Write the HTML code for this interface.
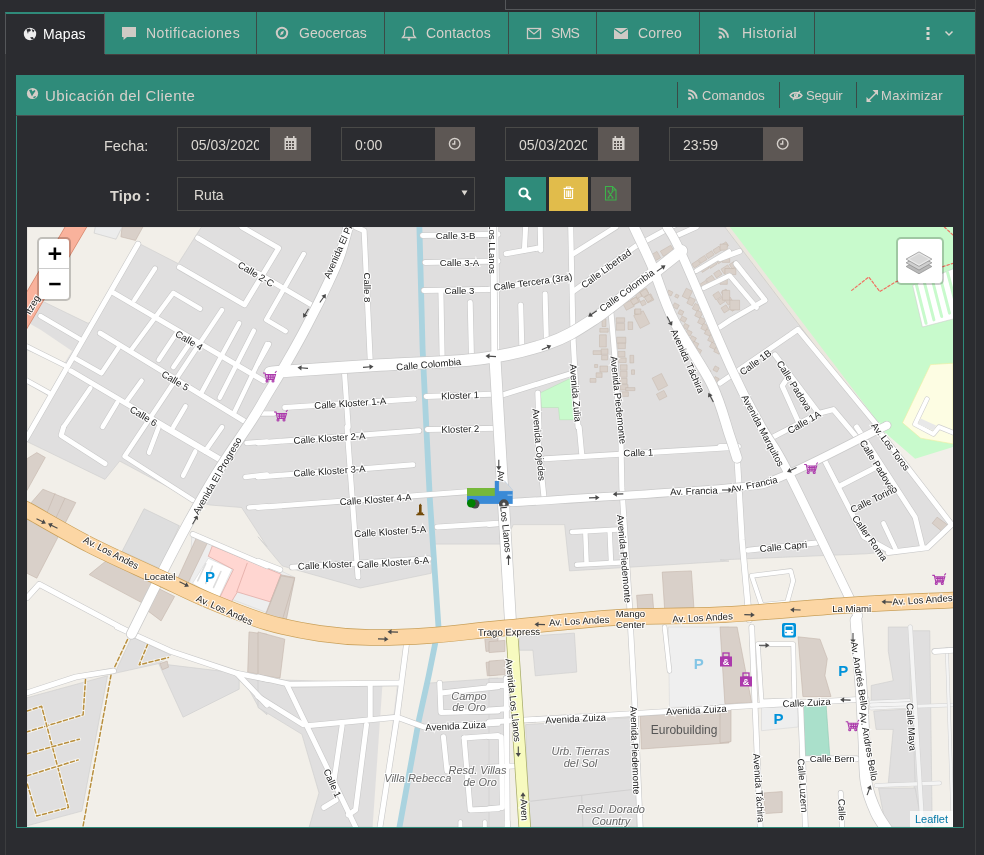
<!DOCTYPE html>
<html><head><meta charset="utf-8">
<style>
*{box-sizing:border-box;margin:0;padding:0}
html,body{width:984px;height:855px;overflow:hidden;background:#2b2c30;font-family:"Liberation Sans",sans-serif}
.abs{position:absolute}
#topbox{left:505px;top:-2px;width:471px;height:12px;border:1px solid #55575a;border-top:none}
#lline{left:5px;top:53px;width:1px;height:802px;background:#3c3d3f}
#rline{left:975px;top:0;width:1px;height:855px;background:#3c3d3f}
#tabs{left:5px;top:12px;width:970px;height:42px;background:#2f8b7a}
.tab{position:absolute;top:0;height:42px;color:#d9d5cf;font-size:14.5px;line-height:42px;border-right:1px solid #3d4a47}
.tab svg{position:absolute}
#active{left:5px;top:12px;width:100px;height:42px;background:#2b2c30;border-top:2px solid #2f8b7a;border-left:1px solid #55575a;border-right:1px solid #55575a}
.tt{position:absolute;top:12.4px;height:42px;line-height:42px;font-size:14px;color:#d6d1cb;white-space:nowrap}
.sep{position:absolute;top:12px;width:1px;height:42px;background:#3b4a46}
.sep2{position:absolute;top:82px;width:1px;height:26px;background:#3a4a46}
.hl{position:absolute;top:76px;line-height:40px;font-size:13px;color:#d8d0cb;white-space:nowrap}
.lbl{position:absolute;line-height:34px;white-space:nowrap}
#phead{left:16px;top:75px;width:948px;height:41px;background:#2f8b7a;border-bottom:1px solid #4a4e50}
#pbody{left:16px;top:116px;width:948px;height:712px;border:1px solid #2f8b7a;border-top:none}
.lbl{color:#dcd8d2;font-size:14.5px}
.inp{position:absolute;height:34px;border:1px solid #4a4a48;background:#2b2c30;color:#dcd8d2;font-size:14px;line-height:34px}
.add{position:absolute;height:34px;background:#5d5754}
.btn{position:absolute;height:34px}
#map{left:27px;top:227px;width:926px;height:600px;overflow:hidden;background:#f2efe9;will-change:transform}
</style></head><body><div id="wrap" style="position:absolute;left:0;top:0;width:984px;height:855px;will-change:transform">
<div id="topbox" class="abs"></div>
<div id="lline" class="abs"></div>
<div id="rline" class="abs"></div>
<div id="tabs" class="abs"></div>
<div id="active" class="abs"></div>
<svg class="abs" style="left:0;top:0;z-index:5" width="984" height="60" viewBox="0 0 984 60">
 <g fill="#eeeeee"><circle cx="30" cy="34" r="6.2"/></g>
 <g fill="#2b2c30"><path d="M26.5 29.5 l3 -1 l1.5 1.5 l-1 1.5 l-1.5 0 l-0.5 2.5 z M31.5 29 l3 1.5 l-1.5 2 z M30 37.5 l2.5 -0.5 l1.5 1.5 l-2 1 z"/></g>
 <!-- notif bubble -->
 <path d="M122 27 h14 v10 h-9 l-3.5 3 v-3 h-1.5 z" fill="#cfcac5"/>
 <!-- geocercas compass -->
 <circle cx="282" cy="33" r="5.2" fill="none" stroke="#cfcac5" stroke-width="2"/>
 <path d="M280 35.5 l1 -3.5 l3 -1.5 l-1 3.5 z" fill="#cfcac5"/>
 <!-- bell -->
 <path d="M409 27 c-3 0 -4.5 2.5 -4.5 5 v3 l-2 2.5 h13 l-2 -2.5 v-3 c0 -2.5 -1.5 -5 -4.5 -5 z" fill="none" stroke="#cfcac5" stroke-width="1.3"/>
 <circle cx="409" cy="39.5" r="1.3" fill="#cfcac5"/>
 <!-- envelope outline -->
 <rect x="527.5" y="28.5" width="13" height="10" fill="none" stroke="#cfcac5" stroke-width="1.3"/>
 <path d="M528 29 l6 5 l6 -5" fill="none" stroke="#cfcac5" stroke-width="1.2"/>
 <!-- envelope solid -->
 <path d="M614 28 h14 v11 h-14 z" fill="#cfcac5"/>
 <path d="M614 28.5 l7 5 l7 -5" fill="none" stroke="#2f8b7a" stroke-width="1.2"/>
 <!-- rss -->
 <g fill="none" stroke="#cfcac5"><circle cx="720.3" cy="37.3" r="1.7" fill="#cfcac5" stroke="none"/>
 <path d="M718.7 32.2 a5.6 5.6 0 0 1 5.6 5.6" stroke-width="2"/>
 <path d="M718.7 28.5 a9.3 9.3 0 0 1 9.3 9.3" stroke-width="2"/></g>
 <!-- kebab -->
 <g fill="#d9d5cf"><rect x="926.5" y="27" width="3" height="3"/><rect x="926.5" y="32" width="3" height="3"/><rect x="926.5" y="37" width="3" height="3"/></g>
 <path d="M945.5 31.5 l3.5 3.5 l3.5 -3.5" fill="none" stroke="#d9d5cf" stroke-width="1.5"/>
</svg>
<div class="tt" style="left:43px;top:13px;color:#fff;letter-spacing:0.15px">Mapas</div>
<div class="tt" style="left:146px;letter-spacing:0.5px">Notificaciones</div>
<div class="tt" style="left:299px;letter-spacing:0px">Geocercas</div>
<div class="tt" style="left:426px;letter-spacing:0.2px">Contactos</div>
<div class="tt" style="left:551px;letter-spacing:-0.7px">SMS</div>
<div class="tt" style="left:638px;letter-spacing:0.2px">Correo</div>
<div class="tt" style="left:742px;letter-spacing:0.5px">Historial</div>
<div class="sep" style="left:256px"></div>
<div class="sep" style="left:384px"></div>
<div class="sep" style="left:508px"></div>
<div class="sep" style="left:596px"></div>
<div class="sep" style="left:699px"></div>
<div class="sep" style="left:814px"></div>
<div class="abs" style="left:105px;top:54px;width:870px;height:1px;background:#45403f"></div>
<div id="phead" class="abs"></div>
<div id="pbody" class="abs"></div>
<svg class="abs" style="left:0;top:60px;z-index:5" width="984" height="160" viewBox="0 60 984 160">
 <!-- header globe -->
 <circle cx="32.5" cy="93.5" r="5.6" fill="#d5cdc8"/>
 <path d="M29 90 l2.5 -0.5 l1 2 l2 -1.5 l1 1 l-2.5 3.5 l-1 2 z M33 97 l2.5 -1 l0.5 1 l-2 1.5 z" fill="#2f8b7a"/>
 <!-- header icons -->
 <g fill="none" stroke="#d5cdc8"><circle cx="689.6" cy="98.4" r="1.6" fill="#d5cdc8" stroke="none"/>
 <path d="M688.2 93.6 a5.2 5.2 0 0 1 5.2 5.2" stroke-width="1.9"/>
 <path d="M688.2 90.2 a8.6 8.6 0 0 1 8.6 8.6" stroke-width="1.9"/></g>
 <g fill="none" stroke="#d5cdc8" stroke-width="1.3"><path d="M790 95.5 c3 -4 9 -4 12 0 c-3 4 -9 4 -12 0 z"/><path d="M793 100 l7 -9"/><circle cx="796" cy="95.5" r="1.6"/></g>
 <g fill="none" stroke="#d5cdc8" stroke-width="1.5"><path d="M868 101 l9 -9"/></g>
 <g fill="#d5cdc8"><path d="M866.5 97 v5 h5 z"/><path d="M878 90 v5.5 h-0 l-5.5 -5.5 z"/></g>
 <!-- calendar icons -->
 <g fill="#d5d0cb">
  <path d="M284.5 138 h12 v12 h-12 z"/>
  <path d="M612.5 138 h12 v12 h-12 z"/>
 </g>
 <g fill="#5d5754">
  <path d="M286 141 h2 v2 h-2z M289 141 h2 v2 h-2z M292 141 h2 v2 h-2z M286 144 h2 v2 h-2z M289 144 h2 v2 h-2z M292 144 h2 v2 h-2z M286 147 h2 v2 h-2z M289 147 h2 v2 h-2z M292 147 h2 v2 h-2z"/>
  <path d="M614 141 h2 v2 h-2z M617 141 h2 v2 h-2z M620 141 h2 v2 h-2z M614 144 h2 v2 h-2z M617 144 h2 v2 h-2z M620 144 h2 v2 h-2z M614 147 h2 v2 h-2z M617 147 h2 v2 h-2z M620 147 h2 v2 h-2z"/>
 </g>
 <g fill="#d5d0cb"><rect x="286.5" y="136" width="1.6" height="3"/><rect x="293" y="136" width="1.6" height="3"/><rect x="614.5" y="136" width="1.6" height="3"/><rect x="621" y="136" width="1.6" height="3"/></g>
 <!-- clocks -->
 <g fill="none" stroke="#d5d0cb" stroke-width="1.4"><circle cx="454.7" cy="143.8" r="5.3"/><path d="M454.7 140.5 v3.5 h-2.5"/><circle cx="782.7" cy="143.8" r="5.3"/><path d="M782.7 140.5 v3.5 h-2.5"/></g>
 <!-- select arrow -->
 <path d="M461.5 190.5 h6 l-3 5 z" fill="#dcd8d2"/>
 <!-- search -->
 <circle cx="523.5" cy="192.5" r="4" fill="none" stroke="#fff" stroke-width="2.2"/>
 <path d="M526.5 195.5 l3.5 3.5" stroke="#fff" stroke-width="2.6" stroke-linecap="round"/>
 <!-- trash -->
 <g fill="none" stroke="#fff" stroke-width="1.2"><path d="M563.5 188.5 h10"/><path d="M566.5 188.5 v-1.5 h4 v1.5"/><path d="M564.5 189.5 v9 h8 v-9"/><path d="M566.8 190.5 v6.5 M568.5 190.5 v6.5 M570.2 190.5 v6.5"/></g>
 <!-- excel -->
 <g fill="none" stroke="#3cb34a" stroke-width="1.1"><path d="M605.5 186.5 h7 l3.5 3.5 v10 h-10.5 z"/><path d="M612.5 186.5 v3.5 h3.5"/><path d="M608 191 l5 7 M613 191 l-5 7 M607.5 191 h2 M611.5 191 h2 M607.5 198 h2 M611.5 198 h2"/></g>
</svg>
<div class="abs" style="left:45px;top:76px;line-height:40px;font-size:15px;color:#d8d0cb;letter-spacing:0.45px;white-space:nowrap">Ubicación del Cliente</div>
<div class="sep2" style="left:677px"></div>
<div class="sep2" style="left:779px"></div>
<div class="sep2" style="left:856px"></div>
<div class="hl" style="left:702px">Comandos</div>
<div class="hl" style="left:806px;letter-spacing:-0.2px">Seguir</div>
<div class="hl" style="left:881px;letter-spacing:0.3px">Maximizar</div>
<div class="lbl" style="left:104px;top:129px">Fecha:</div>
<div class="lbl" style="left:110px;top:178.5px;font-weight:bold;letter-spacing:0.2px">Tipo :</div>
<div class="inp" style="left:177px;top:127px;width:94px;padding-left:13px;white-space:nowrap"><span style="display:block;overflow:hidden;width:68px">05/03/2020</span></div>
<div class="add" style="left:270px;top:127px;width:41px"></div>
<div class="inp" style="left:341px;top:127px;width:95px;padding-left:13px">0:00</div>
<div class="add" style="left:435px;top:127px;width:40px"></div>
<div class="inp" style="left:505px;top:127px;width:94px;padding-left:13px;white-space:nowrap"><span style="display:block;overflow:hidden;width:68px">05/03/2020</span></div>
<div class="add" style="left:598px;top:127px;width:41px"></div>
<div class="inp" style="left:669px;top:127px;width:95px;padding-left:13px">23:59</div>
<div class="add" style="left:763px;top:127px;width:40px"></div>
<div class="inp" style="left:177px;top:177px;width:298px;padding-left:16px;line-height:35px">Ruta</div>
<div class="btn" style="left:505px;top:177px;width:41px;background:#2f8b7a"></div>
<div class="btn" style="left:549px;top:177px;width:39px;background:#e1bc4b"></div>
<div class="btn" style="left:591px;top:177px;width:40px;background:#5d5754"></div>
<div id="map" class="abs"><svg width="926" height="600" viewBox="27 227 926 600" style="display:block;font-family:'Liberation Sans',sans-serif"><path d="M27 227 L39 227 L27 234 Z" fill="#c8facc"/>
<path d="M727.3 227 L953 227 L953 827 L878.5 427 Z" fill="#c8facc"/>
<path d="M885.9 427.0 L915.1 458.7 L960.0 449.0 L960.0 427.0 Z" fill="#c8facc"/>
<path d="M930.5 364.6 L953 363.2 L953 443.9 L920.7 438.2 L902.5 422.8 Z" fill="#fdfde3" stroke="#eeeea0" stroke-width="0.6"/>
<path d="M878.5 427 L876.1 427.0 L951.7 524.6 L927.3 547.7 L866.3 553.8 L720.0 559.9 L720 827 L953 827 L953 447 L915.1 458.7 Z" fill="#f2efe9"/>
<path d="M201.4 227 L727.3 227 L878.5 427 L951.7 524.6 L927.3 547.7 L866.3 553.8 L720.0 559.9 L729.0 561.1 L569.5 570.9 L564.6 524.6 L513.4 524.6 L503.6 544.1 L489.0 544.1 L433.6 544.1 L431.2 573.3 L360.4 588.0 L282.4 566.0 L258.0 536.8 L267.0 546.5 L241.6 507.5 L209.9 505.0 L192.9 500.2 L119.7 461.1 L105.0 479.4 L27.0 441.6 L27 227 Z" fill="#e0dfdf" stroke="#cdcccc" stroke-width="0.6"/>
<path d="M27.0 227.0 L201.4 227.0 L178.2 263.6 L138.0 242.9 L95.3 319.7 L88.0 323.3 L40.4 300.2 L31.9 320.9 L27.0 319.7 Z" fill="#f2efe9" stroke="#cdcccc" stroke-width="0.6"/>
<path d="M27 347.5 L32.6 350.4 L65 362.3 L72 351 L41 330 L27 322 Z" fill="#f2efe9"/>
<path d="M27 350 L68 364 L30 432 L27 436 Z" fill="#f2efe9" stroke="#cdcccc" stroke-width="0.6"/>
<path d="M27.0 697.7 L107.5 675.8 L81.9 811.1 L27.0 825.8 Z" fill="#e0dfdf" stroke="#cdcccc" stroke-width="0.6"/>
<path d="M114.8 673.3 L131.9 636.8 L170.9 655.0 L158.7 663.6 Z" fill="#e0dfdf" stroke="#cdcccc" stroke-width="0.6"/>
<path d="M158.7 663.6 L239.2 673.3 L239.2 689.2 L183.1 717.2 Z" fill="#e0dfdf" stroke="#cdcccc" stroke-width="0.6"/>
<path d="M241.6 675.8 L267.0 680.7 L267.0 714.8 L258.7 707.5 Z" fill="#e0dfdf" stroke="#cdcccc" stroke-width="0.6"/>
<path d="M258.0 679.4 L401.9 683.1 L380.0 827.0 L309.2 827.0 L319.0 792.9 L301.9 734.3 L258.0 707.5 Z" fill="#e0dfdf" stroke="#cdcccc" stroke-width="0.6"/>
<path d="M428.7 683.1 L498.0 678.2 L498.0 827.0 L399.5 827.0 L419.0 719.7 Z" fill="#e0dfdf" stroke="#cdcccc" stroke-width="0.6"/>
<path d="M382.4 685.5 L397.0 685.5 L380.0 827.0 L372.6 827.0 Z" fill="#f2efe9"/>
<path d="M519.5 636.8 L574.4 633.1 L576.8 672.1 L535.3 675.8 L532.9 650.2 L519.5 650.2 Z" fill="#e0dfdf" stroke="#cdcccc" stroke-width="0.6"/>
<path d="M489.0 678.2 L507.3 678.2 L506.1 827.0 L489.0 827.0 Z" fill="#e0dfdf" stroke="#cdcccc" stroke-width="0.6"/>
<path d="M525.6 724.6 L635.3 717.2 L636.6 827.0 L529.2 827.0 Z" fill="#e0dfdf" stroke="#cdcccc" stroke-width="0.6"/>
<path d="M529.2 801.4 L581.7 795.3 L635.3 789.2" fill="none" stroke="#cdcccc" stroke-width="0.8"/>
<path d="M581.7 795.3 L582.9 827.0" fill="none" stroke="#cdcccc" stroke-width="0.8"/>
<path d="M888.3 627.0 L910.2 627.0 L910.2 700.2 L871.2 700.2 L871.2 685.5 L893.2 680.7 L888.3 651.4 Z" fill="#e0dfdf" stroke="#cdcccc" stroke-width="0.6"/>
<path d="M910.2 630.7 L929.8 630.7 L932.2 827.0 L915.1 827.0 Z" fill="#e0dfdf" stroke="#cdcccc" stroke-width="0.6"/>
<path d="M873.7 711.1 L912.7 708.7 L915.1 783.1 L888.3 783.1 L893.2 729.4 L876.1 729.4 Z" fill="#e0dfdf" stroke="#cdcccc" stroke-width="0.6"/>
<path d="M878.5 788.0 L915.1 788.0 L922.4 827.0 L885.9 827.0 Z" fill="#e0dfdf" stroke="#cdcccc" stroke-width="0.6"/>
<path d="M668.3 627.0 L729.0 627.0 L729.0 705.0 L669.5 707.5 Z" fill="#efefef" stroke="#dadada" stroke-width="0.6"/>
<path d="M720.0 627.0 L737.1 627.0 L751.7 702.6 L724.9 703.8 Z" fill="#d9d0c9" stroke="#c4b6ab" stroke-width="0.6"/>
<path d="M761.5 707.5 L798.0 706.3 L798.0 727.0 L761.5 730.7 Z" fill="#eeeeee" stroke="#d6d6d6" stroke-width="0.6"/>
<path d="M802.9 706.3 L826.1 705.0 L829.8 756.3 L805.4 756.3 Z" fill="#aae0cb" stroke="#8fcab3" stroke-width="0.6"/>
<path d="M144.1 508.7 L179.4 525.8 L159.9 568.5 L122.1 551.4 Z" fill="#dedede" stroke="#c9c9c9" stroke-width="0.6"/>
<path d="M540.2 392.9 L570.7 378.2 L574.4 419.7 L559.7 419.7 L558.5 407.5 L541.4 407.5 Z" fill="#c8facc" stroke="#b5e0b5" stroke-width="0.5"/>
<path d="M191.8 534.5 L279.6 570.2 L294.8 577.5 L286.2 620.0 L189.8 583.4 Z" fill="#eeeeee" stroke="#d6d6d6" stroke-width="0.6"/>
<path d="M192.5 583.4 L208.3 558.3 L232.1 568.9 L218.9 597.9 L205.7 591.3 Z" fill="#ffffff" stroke="#d6d6d6" stroke-width="0.6"/>
<path d="M212.3 545.8 L281.0 574.2 L270.4 601.9 L237.4 592.0 L230.1 603.9 L218.9 599.3 L233.4 569.5 L208.3 556.3 Z" fill="#ffd6d1" stroke="#d99c95" stroke-width="0.6"/>
<path d="M247.3 562.9 L236.7 592.0" stroke="#d99c95" stroke-width="0.6" fill="none"/>
<path d="M205.7 563.6 L197.7 580.8" stroke="#dddddd" stroke-width="1.6" fill="none" stroke-linecap="round"/>
<path d="M212.3 566.2 L205.7 583.4" stroke="#dddddd" stroke-width="1.6" fill="none" stroke-linecap="round"/>
<path d="M220.9 571.5 L213.6 587.4" stroke="#dddddd" stroke-width="1.6" fill="none" stroke-linecap="round"/>
<path d="M122.1 227.0 L142.9 227.0 L135.5 240.4 L120.9 236.8 Z" fill="#d9d0c9" stroke="#c4b6ab" stroke-width="0.6"/>
<path d="M27.0 458.7 L36.8 452.6 L45.3 457.5 L27.0 490.4 Z" fill="#d9d0c9" stroke="#c4b6ab" stroke-width="0.6"/>
<path d="M42.9 489.2 L75.8 502.6 L36.8 578.2 L27.0 573.3 L27.0 507.5 Z" fill="#d9d0c9" stroke="#c4b6ab" stroke-width="0.6"/>
<path d="M89.2 574.6 L108.7 558.7 L153.8 583.1 L141.6 602.6 Z" fill="#d9d0c9" stroke="#c4b6ab" stroke-width="0.6"/>
<path d="M146.5 609.9 L159.9 589.2 L174.6 596.5 L161.1 620.9 Z" fill="#d9d0c9" stroke="#c4b6ab" stroke-width="0.6"/>
<path d="M196.4 537.8 L207.6 542.5 L187.8 583.4 L177.9 578.1 Z" fill="#d9d0c9" stroke="#c4b6ab" stroke-width="0.6"/>
<path d="M281.0 574.8 L294.8 577.5 L286.2 620.0 L265.1 615.1 Z" fill="#d9d0c9" stroke="#c4b6ab" stroke-width="0.6"/>
<path d="M281.2 575.8 L294.6 578.2 L282.4 619.7 L265.3 616.0 Z" fill="#d9d0c9" stroke="#c4b6ab" stroke-width="0.6"/>
<path d="M662.2 572.1 L691.4 570.9 L693.9 607.5 L664.6 608.7 Z" fill="#d9d0c9" stroke="#c4b6ab" stroke-width="0.6"/>
<path d="M636.6 595.3 L652.4 594.1 L653.6 608.7 L637.8 609.9 Z" fill="#d9d0c9" stroke="#c4b6ab" stroke-width="0.6"/>
<path d="M932.2 523.3 L937.1 517.2 L950.5 527.0 L945.6 534.3 Z" fill="#d9d0c9" stroke="#c4b6ab" stroke-width="0.6"/>
<path d="M249.0 631.9 L267.0 634.3 L267.0 675.8 L247.7 672.1 Z" fill="#d9d0c9" stroke="#c4b6ab" stroke-width="0.6"/>
<path d="M159.9 663.6 L167.2 661.1 L168.5 667.2 L162.4 669.7 Z" fill="#d9d0c9" stroke="#c4b6ab" stroke-width="0.6"/>
<path d="M258.0 631.9 L284.8 639.2 L280.0 678.2 L258.0 674.6 Z" fill="#d9d0c9" stroke="#c4b6ab" stroke-width="0.6"/>
<path d="M484.8 639.2 L498.0 638.0 L498.0 650.2 L486.0 651.4 Z" fill="#d9d0c9" stroke="#c4b6ab" stroke-width="0.6"/>
<path d="M486.0 662.4 L498.0 661.1 L498.0 674.6 L487.3 675.8 Z" fill="#d9d0c9" stroke="#c4b6ab" stroke-width="0.6"/>
<path d="M489.0 641.6 L504.9 640.4 L504.9 651.4 L489.0 652.6 Z" fill="#d9d0c9" stroke="#c4b6ab" stroke-width="0.6"/>
<path d="M489.0 661.1 L504.9 659.9 L504.9 674.6 L489.0 675.8 Z" fill="#d9d0c9" stroke="#c4b6ab" stroke-width="0.6"/>
<path d="M640.2 716.0 L729.0 709.9 L729.0 742.9 L641.4 749.0 Z" fill="#d9d0c9" stroke="#c4b6ab" stroke-width="0.6"/>
<path d="M720.0 709.9 L731.0 709.9 L731.0 741.6 L720.0 742.9 Z" fill="#d9d0c9" stroke="#c4b6ab" stroke-width="0.6"/>
<path d="M763.9 792.9 L782.2 791.6 L782.2 812.4 L765.1 813.6 Z" fill="#d9d0c9" stroke="#c4b6ab" stroke-width="0.6"/>
<path d="M798.0 636.8 L820.0 639.2 L827.3 658.7 L824.9 675.8 L831.0 696.5 L802.9 696.5 Z" fill="#d9d0c9" stroke="#c4b6ab" stroke-width="0.6"/>
<path d="M95.3 227.0 L122.1 227.0 L116.0 239.2 L94.1 233.1 Z" fill="#ececec" stroke="#c9c9c9" stroke-width="0.6"/>
<path d="M55.2 493.1 L44 520 M65.1 498 L54 522" stroke="#c4b6ab" stroke-width="0.6" fill="none"/>
<path d="M668.6 290.0 L672.9 292.2 L671.0 296.0 L666.7 293.8 Z" fill="#d9d0c9" stroke="#c4b6ab" stroke-width="0.5"/>
<path d="M676.1 294.0 L679.1 295.5 L677.7 298.2 L674.7 296.7 Z" fill="#d9d0c9" stroke="#c4b6ab" stroke-width="0.5"/>
<path d="M674.6 302.8 L679.3 305.2 L677.2 309.2 L672.5 306.8 Z" fill="#d9d0c9" stroke="#c4b6ab" stroke-width="0.5"/>
<path d="M679.8 309.6 L683.9 311.6 L682.0 315.4 L677.9 313.4 Z" fill="#d9d0c9" stroke="#c4b6ab" stroke-width="0.5"/>
<path d="M682.2 316.0 L686.9 318.4 L684.8 322.4 L680.1 320.0 Z" fill="#d9d0c9" stroke="#c4b6ab" stroke-width="0.5"/>
<path d="M684.9 323.4 L689.2 325.6 L687.1 329.6 L682.8 327.4 Z" fill="#d9d0c9" stroke="#c4b6ab" stroke-width="0.5"/>
<path d="M687.5 329.7 L692.2 332.1 L690.1 336.1 L685.4 333.7 Z" fill="#d9d0c9" stroke="#c4b6ab" stroke-width="0.5"/>
<path d="M691.7 335.7 L696.4 338.1 L694.3 342.1 L689.6 339.7 Z" fill="#d9d0c9" stroke="#c4b6ab" stroke-width="0.5"/>
<path d="M694.0 341.3 L698.8 343.7 L696.6 348.1 L691.8 345.7 Z" fill="#d9d0c9" stroke="#c4b6ab" stroke-width="0.5"/>
<path d="M696.9 347.8 L701.7 350.3 L699.5 354.6 L694.7 352.1 Z" fill="#d9d0c9" stroke="#c4b6ab" stroke-width="0.5"/>
<path d="M686.3 288.2 L692.4 291.3 L688.3 299.4 L682.2 296.3 Z" fill="#d9d0c9" stroke="#c4b6ab" stroke-width="0.5"/>
<path d="M689.9 297.0 L695.4 299.7 L692.3 305.8 L686.8 303.1 Z" fill="#d9d0c9" stroke="#c4b6ab" stroke-width="0.5"/>
<path d="M695.1 303.4 L700.5 306.2 L697.7 311.6 L692.3 308.8 Z" fill="#d9d0c9" stroke="#c4b6ab" stroke-width="0.5"/>
<path d="M697.5 310.3 L702.7 312.9 L699.9 318.3 L694.7 315.7 Z" fill="#d9d0c9" stroke="#c4b6ab" stroke-width="0.5"/>
<path d="M700.4 317.1 L705.8 319.9 L703.0 325.3 L697.6 322.5 Z" fill="#d9d0c9" stroke="#c4b6ab" stroke-width="0.5"/>
<path d="M703.4 323.3 L708.6 325.9 L706.0 331.1 L700.8 328.5 Z" fill="#d9d0c9" stroke="#c4b6ab" stroke-width="0.5"/>
<path d="M706.7 328.9 L712.1 331.6 L709.7 336.3 L704.3 333.6 Z" fill="#d9d0c9" stroke="#c4b6ab" stroke-width="0.5"/>
<path d="M710.4 334.9 L715.6 337.5 L712.8 342.9 L707.6 340.3 Z" fill="#d9d0c9" stroke="#c4b6ab" stroke-width="0.5"/>
<path d="M711.9 342.2 L717.3 344.9 L714.9 349.6 L709.5 346.9 Z" fill="#d9d0c9" stroke="#c4b6ab" stroke-width="0.5"/>
<path d="M715.7 347.4 L721.1 350.1 L719.1 354.2 L713.7 351.5 Z" fill="#d9d0c9" stroke="#c4b6ab" stroke-width="0.5"/>
<path d="M705.5 368.4 L710.9 371.1 L708.5 375.8 L703.1 373.1 Z" fill="#d9d0c9" stroke="#c4b6ab" stroke-width="0.5"/>
<path d="M715.1 365.9 L719.2 368.0 L717.1 372.1 L713.0 370.0 Z" fill="#d9d0c9" stroke="#c4b6ab" stroke-width="0.5"/>
<path d="M709.1 379.6 L713.2 381.7 L711.1 385.8 L707.0 383.7 Z" fill="#d9d0c9" stroke="#c4b6ab" stroke-width="0.5"/>
<path d="M715.1 376.6 L719.2 378.7 L717.1 382.8 L713.0 380.7 Z" fill="#d9d0c9" stroke="#c4b6ab" stroke-width="0.5"/>
<path d="M602.1 318.9 L605.9 318.9 L605.9 326.5 L602.1 326.5 Z" fill="#d9d0c9" stroke="#c4b6ab" stroke-width="0.5"/>
<path d="M599.8 328.4 L608.2 328.4 L608.2 332.2 L599.8 332.2 Z" fill="#d9d0c9" stroke="#c4b6ab" stroke-width="0.5"/>
<path d="M599.5 334.8 L606.3 334.8 L606.3 347.0 L599.5 347.0 Z" fill="#d9d0c9" stroke="#c4b6ab" stroke-width="0.5"/>
<path d="M593.1 350.7 L601.5 350.7 L601.5 354.5 L593.1 354.5 Z" fill="#d9d0c9" stroke="#c4b6ab" stroke-width="0.5"/>
<path d="M601.2 348.9 L608.0 348.9 L608.0 354.3 L601.2 354.3 Z" fill="#d9d0c9" stroke="#c4b6ab" stroke-width="0.5"/>
<path d="M601.6 355.3 L607.6 355.3 L607.6 359.9 L601.6 359.9 Z" fill="#d9d0c9" stroke="#c4b6ab" stroke-width="0.5"/>
<path d="M599.9 366.0 L607.5 366.0 L607.5 372.0 L599.9 372.0 Z" fill="#d9d0c9" stroke="#c4b6ab" stroke-width="0.5"/>
<path d="M594.6 364.5 L597.6 364.5 L597.6 367.5 L594.6 367.5 Z" fill="#d9d0c9" stroke="#c4b6ab" stroke-width="0.5"/>
<path d="M596.1 372.8 L602.1 372.8 L602.1 377.4 L596.1 377.4 Z" fill="#d9d0c9" stroke="#c4b6ab" stroke-width="0.5"/>
<path d="M590.0 378.5 L596.0 378.5 L596.0 382.3 L590.0 382.3 Z" fill="#d9d0c9" stroke="#c4b6ab" stroke-width="0.5"/>
<path d="M616.2 317.8 L624.6 317.8 L624.6 322.4 L616.2 322.4 Z" fill="#d9d0c9" stroke="#c4b6ab" stroke-width="0.5"/>
<path d="M616.2 323.4 L624.6 323.4 L624.6 330.2 L616.2 330.2 Z" fill="#d9d0c9" stroke="#c4b6ab" stroke-width="0.5"/>
<path d="M628.0 321.9 L632.6 321.9 L632.6 329.5 L628.0 329.5 Z" fill="#d9d0c9" stroke="#c4b6ab" stroke-width="0.5"/>
<path d="M616.6 337.2 L625.8 337.2 L625.8 343.2 L616.6 343.2 Z" fill="#d9d0c9" stroke="#c4b6ab" stroke-width="0.5"/>
<path d="M617.8 343.2 L625.4 343.2 L625.4 348.6 L617.8 348.6 Z" fill="#d9d0c9" stroke="#c4b6ab" stroke-width="0.5"/>
<path d="M618.2 351.4 L625.0 351.4 L625.0 356.8 L618.2 356.8 Z" fill="#d9d0c9" stroke="#c4b6ab" stroke-width="0.5"/>
<path d="M618.6 357.9 L626.2 357.9 L626.2 362.5 L618.6 362.5 Z" fill="#d9d0c9" stroke="#c4b6ab" stroke-width="0.5"/>
<path d="M620.3 364.8 L627.1 364.8 L627.1 370.2 L620.3 370.2 Z" fill="#d9d0c9" stroke="#c4b6ab" stroke-width="0.5"/>
<path d="M620.3 371.3 L627.1 371.3 L627.1 377.3 L620.3 377.3 Z" fill="#d9d0c9" stroke="#c4b6ab" stroke-width="0.5"/>
<path d="M620.3 378.5 L627.1 378.5 L627.1 383.9 L620.3 383.9 Z" fill="#d9d0c9" stroke="#c4b6ab" stroke-width="0.5"/>
<path d="M620.4 384.6 L628.0 384.6 L628.0 390.0 L620.4 390.0 Z" fill="#d9d0c9" stroke="#c4b6ab" stroke-width="0.5"/>
<path d="M621.6 391.8 L628.4 391.8 L628.4 396.4 L621.6 396.4 Z" fill="#d9d0c9" stroke="#c4b6ab" stroke-width="0.5"/>
<path d="M629.9 355.3 L633.7 355.3 L633.7 362.9 L629.9 362.9 Z" fill="#d9d0c9" stroke="#c4b6ab" stroke-width="0.5"/>
<path d="M631.5 369.8 L634.5 369.8 L634.5 374.4 L631.5 374.4 Z" fill="#d9d0c9" stroke="#c4b6ab" stroke-width="0.5"/>
<path d="M625.7 387.6 L634.9 387.6 L634.9 390.6 L625.7 390.6 Z" fill="#d9d0c9" stroke="#c4b6ab" stroke-width="0.5"/>
<path d="M633.7 315.6 L643.2 310.8 L649.7 323.6 L640.2 328.4 Z" fill="#d9d0c9" stroke="#c4b6ab" stroke-width="0.5"/>
<path d="M634.5 309.7 L638.3 309.7 L638.3 314.3 L634.5 314.3 Z" fill="#d9d0c9" stroke="#c4b6ab" stroke-width="0.5"/>
<path d="M652.1 378.2 L661.5 373.4 L667.7 385.6 L658.3 390.4 Z" fill="#d9d0c9" stroke="#c4b6ab" stroke-width="0.5"/>
<path d="M656.4 394.2 L663.9 390.4 L667.0 396.4 L659.5 400.2 Z" fill="#d9d0c9" stroke="#c4b6ab" stroke-width="0.5"/>
<path d="M623.2 304.2 L631.3 300.1 L634.4 306.2 L626.3 310.3 Z" fill="#d9d0c9" stroke="#c4b6ab" stroke-width="0.5"/>
<path d="M630.8 299.6 L637.6 296.2 L640.4 301.6 L633.6 305.0 Z" fill="#d9d0c9" stroke="#c4b6ab" stroke-width="0.5"/>
<path d="M640.1 301.9 L644.2 299.8 L646.3 303.9 L642.2 306.0 Z" fill="#d9d0c9" stroke="#c4b6ab" stroke-width="0.5"/>
<path d="M644.7 296.9 L650.8 293.8 L653.9 299.9 L647.8 303.0 Z" fill="#d9d0c9" stroke="#c4b6ab" stroke-width="0.5"/>
<path d="M639.4 291.7 L646.2 288.2 L648.6 292.9 L641.8 296.4 Z" fill="#d9d0c9" stroke="#c4b6ab" stroke-width="0.5"/>
<path d="M635.2 294.5 L639.9 292.1 L642.0 296.1 L637.3 298.5 Z" fill="#d9d0c9" stroke="#c4b6ab" stroke-width="0.5"/>
<path d="M660.4 251.2 L670.7 245.3 L673.6 250.4 L663.3 256.3 Z" fill="#d9d0c9" stroke="#c4b6ab" stroke-width="0.5"/>
<path d="M649.6 255.7 L657.0 251.4 L660.6 257.7 L653.2 262.0 Z" fill="#d9d0c9" stroke="#c4b6ab" stroke-width="0.5"/>
<path d="M691.8 264.0 L697.9 260.1 L700.4 264.0 L694.3 267.9 Z" fill="#d9d0c9" stroke="#c4b6ab" stroke-width="0.5"/>
<path d="M698.4 259.4 L704.5 255.5 L707.0 259.4 L700.9 263.3 Z" fill="#d9d0c9" stroke="#c4b6ab" stroke-width="0.5"/>
<path d="M705.6 254.7 L711.7 250.8 L714.2 254.7 L708.1 258.6 Z" fill="#d9d0c9" stroke="#c4b6ab" stroke-width="0.5"/>
<path d="M712.9 250.1 L719.0 246.2 L721.5 250.1 L715.4 254.0 Z" fill="#d9d0c9" stroke="#c4b6ab" stroke-width="0.5"/>
<path d="M720.5 245.4 L726.0 241.8 L728.5 245.6 L723.0 249.2 Z" fill="#d9d0c9" stroke="#c4b6ab" stroke-width="0.5"/>
<path d="M700.2 269.1 L706.8 264.8 L709.0 268.1 L702.4 272.4 Z" fill="#d9d0c9" stroke="#c4b6ab" stroke-width="0.5"/>
<path d="M708.2 265.1 L714.8 260.8 L717.0 264.1 L710.4 268.4 Z" fill="#d9d0c9" stroke="#c4b6ab" stroke-width="0.5"/>
<path d="M716.1 260.5 L722.7 256.2 L724.9 259.5 L718.3 263.8 Z" fill="#d9d0c9" stroke="#c4b6ab" stroke-width="0.5"/>
<path d="M723.5 255.4 L728.5 252.1 L730.7 255.4 L725.7 258.7 Z" fill="#d9d0c9" stroke="#c4b6ab" stroke-width="0.5"/>
<path d="M699.1 284.8 L705.7 280.4 L708.9 285.4 L702.3 289.8 Z" fill="#d9d0c9" stroke="#c4b6ab" stroke-width="0.5"/>
<path d="M705.9 279.3 L712.0 275.3 L715.3 280.3 L709.2 284.3 Z" fill="#d9d0c9" stroke="#c4b6ab" stroke-width="0.5"/>
<path d="M713.6 273.5 L719.1 269.9 L722.0 274.3 L716.5 277.9 Z" fill="#d9d0c9" stroke="#c4b6ab" stroke-width="0.5"/>
<path d="M721.0 269.2 L727.7 264.9 L730.6 269.4 L723.9 273.7 Z" fill="#d9d0c9" stroke="#c4b6ab" stroke-width="0.5"/>
<path d="M729.3 264.5 L733.8 261.6 L736.7 266.1 L732.2 269.0 Z" fill="#d9d0c9" stroke="#c4b6ab" stroke-width="0.5"/>
<path d="M712.8 295.0 L718.4 291.4 L721.6 296.4 L716.0 300.0 Z" fill="#d9d0c9" stroke="#c4b6ab" stroke-width="0.5"/>
<path d="M721.0 292.2 L726.0 289.0 L729.2 294.0 L724.2 297.2 Z" fill="#d9d0c9" stroke="#c4b6ab" stroke-width="0.5"/>
<path d="M717.2 300.4 L722.2 297.2 L725.0 301.6 L720.0 304.8 Z" fill="#d9d0c9" stroke="#c4b6ab" stroke-width="0.5"/>
<path d="M725.0 300.1 L730.0 296.9 L733.2 301.9 L728.2 305.1 Z" fill="#d9d0c9" stroke="#c4b6ab" stroke-width="0.5"/>
<path d="M721.0 308.0 L726.0 304.8 L729.2 309.8 L724.2 313.0 Z" fill="#d9d0c9" stroke="#c4b6ab" stroke-width="0.5"/>
<path d="M729.3 306.8 L733.8 303.9 L736.7 308.4 L732.2 311.3 Z" fill="#d9d0c9" stroke="#c4b6ab" stroke-width="0.5"/>
<path d="M630.4 300.6 L635.9 297.0 L638.8 301.4 L633.3 305.0 Z" fill="#d9d0c9" stroke="#c4b6ab" stroke-width="0.5"/>
<path d="M640.1 292.4 L645.7 288.8 L648.9 293.8 L643.3 297.4 Z" fill="#d9d0c9" stroke="#c4b6ab" stroke-width="0.5"/>
<path d="M634.9 308.9 L640.9 308.9 L640.9 314.1 L634.9 314.1 Z" fill="#d9d0c9" stroke="#c4b6ab" stroke-width="0.5"/>
<path d="M644.4 297.4 L649.4 294.2 L652.6 299.2 L647.6 302.4 Z" fill="#d9d0c9" stroke="#c4b6ab" stroke-width="0.5"/>
<path d="M720.0 244.1 L727.3170731707318 244.1 L727.3170731707318 250.19756097560975 L720.0 250.19756097560975 Z" fill="#d9d0c9" stroke="#c4b6ab" stroke-width="0.5"/>
<path d="M722.4 256.3 L729.7170731707317 256.3 L729.7170731707317 262.3975609756098 L722.4 262.3975609756098 Z" fill="#d9d0c9" stroke="#c4b6ab" stroke-width="0.5"/>
<path d="M724.9 268.5 L735.8756097560976 268.5 L735.8756097560976 274.5975609756098 L724.9 274.5975609756098 Z" fill="#d9d0c9" stroke="#c4b6ab" stroke-width="0.5"/>
<path d="M720.0 278.2 L727.3170731707318 278.2 L727.3170731707318 284.29756097560977 L720.0 284.29756097560977 Z" fill="#d9d0c9" stroke="#c4b6ab" stroke-width="0.5"/>
<path d="M722.4 290.4 L729.7170731707317 290.4 L729.7170731707317 300.1560975609756 L722.4 300.1560975609756 Z" fill="#d9d0c9" stroke="#c4b6ab" stroke-width="0.5"/>
<path d="M729.8 300.2 L739.5560975609756 300.2 L739.5560975609756 309.9560975609756 L729.8 309.9560975609756 Z" fill="#d9d0c9" stroke="#c4b6ab" stroke-width="0.5"/>
<path d="M720.0 349.0 L724.8780487804878 349.0 L724.8780487804878 353.8780487804878 L720.0 353.8780487804878 Z" fill="#d9d0c9" stroke="#c4b6ab" stroke-width="0.5"/>
<path d="M927 399 L915 424.2 L933.3 434 L939 427 L953 432.6" fill="none" stroke="#cfcfcf" stroke-width="5.2" stroke-linecap="round" stroke-linejoin="round"/>
<path d="M927 399 L915 424.2 L933.3 434 L939 427 L953 432.6" fill="none" stroke="#fff" stroke-width="4" stroke-linecap="round" stroke-linejoin="round"/>
<path d="M920.7 418.6 L936.1 425.6 L933.3 430.5 L917.9 424.2 Z" fill="#e8e8e8"/>
<path d="M727 227 L879 427" stroke="#ebe7de" stroke-width="4.5" fill="none"/>
<path d="M724.8 227 L876.5 427" stroke="#c9c9c9" stroke-width="0.7" fill="none"/>
<path d="M912.7 285.5 L960.0 266.0 L960.0 317.2 L922.4 327.0 Z" fill="#ffffff" stroke="#cfcfcf" stroke-width="0.6"/>
<path d="M916.3 284.3 L926.1 323.3" fill="none" stroke="#c8facc" stroke-width="3" stroke-linecap="round" stroke-linejoin="round" stroke-linecap="butt"/>
<path d="M924.1 281.4 L933.9 319.9" fill="none" stroke="#c8facc" stroke-width="3" stroke-linecap="round" stroke-linejoin="round" stroke-linecap="butt"/>
<path d="M932.0 278.5 L941.7 316.5" fill="none" stroke="#c8facc" stroke-width="3" stroke-linecap="round" stroke-linejoin="round" stroke-linecap="butt"/>
<path d="M939.8 275.5 L949.5 313.1" fill="none" stroke="#c8facc" stroke-width="3" stroke-linecap="round" stroke-linejoin="round" stroke-linecap="butt"/>
<path d="M947.6 272.6 L957.3 309.7" fill="none" stroke="#c8facc" stroke-width="3" stroke-linecap="round" stroke-linejoin="round" stroke-linecap="butt"/>
<path d="M419.4 227.0 L422.59999999999997 349.0 L426.3 427.0 L429.9 500.2 L438.5 627.0 L428.7 675.8 L419.0 719.7 L399.5 827.0" fill="none" stroke="#aad3df" stroke-width="5.8" stroke-linecap="round" stroke-linejoin="round"/>
<path d="M83.1 825.8 L111.1 674.6 L129.4 635.5 L135.5 627.0" fill="none" stroke="#f7f5f0" stroke-width="3.2" stroke-linecap="round" stroke-linejoin="round"/>
<path d="M83.1 825.8 L111.1 674.6 L129.4 635.5 L135.5 627.0" fill="none" stroke="#b88f3e" stroke-width="1.5" stroke-linecap="round" stroke-linejoin="round" stroke-dasharray="4 2.5" stroke-linecap="butt"/>
<path d="M147.7 644.1 L139.2 664.8 L168.5 657.5" fill="none" stroke="#f7f5f0" stroke-width="3.2" stroke-linecap="round" stroke-linejoin="round"/>
<path d="M147.7 644.1 L139.2 664.8 L168.5 657.5" fill="none" stroke="#b88f3e" stroke-width="1.5" stroke-linecap="round" stroke-linejoin="round" stroke-dasharray="4 2.5" stroke-linecap="butt"/>
<path d="M85.5 679.4 L83.1 714.8 L27.0 731.9" fill="none" stroke="#f7f5f0" stroke-width="3.2" stroke-linecap="round" stroke-linejoin="round"/>
<path d="M85.5 679.4 L83.1 714.8 L27.0 731.9" fill="none" stroke="#b88f3e" stroke-width="1.5" stroke-linecap="round" stroke-linejoin="round" stroke-dasharray="4 2.5" stroke-linecap="butt"/>
<path d="M27.0 711.1 L41.6 706.3 L68.5 807.5 L36.8 816.0 L27.0 783.1" fill="none" stroke="#f7f5f0" stroke-width="3.2" stroke-linecap="round" stroke-linejoin="round"/>
<path d="M27.0 711.1 L41.6 706.3 L68.5 807.5 L36.8 816.0 L27.0 783.1" fill="none" stroke="#b88f3e" stroke-width="1.5" stroke-linecap="round" stroke-linejoin="round" stroke-dasharray="4 2.5" stroke-linecap="butt"/>
<path d="M27.0 753.8 L79.4 739.2" fill="none" stroke="#f7f5f0" stroke-width="3.2" stroke-linecap="round" stroke-linejoin="round"/>
<path d="M27.0 753.8 L79.4 739.2" fill="none" stroke="#b88f3e" stroke-width="1.5" stroke-linecap="round" stroke-linejoin="round" stroke-dasharray="4 2.5" stroke-linecap="butt"/>
<path d="M27.0 775.8 L78.2 759.9" fill="none" stroke="#f7f5f0" stroke-width="3.2" stroke-linecap="round" stroke-linejoin="round"/>
<path d="M27.0 775.8 L78.2 759.9" fill="none" stroke="#b88f3e" stroke-width="1.5" stroke-linecap="round" stroke-linejoin="round" stroke-dasharray="4 2.5" stroke-linecap="butt"/>
<path d="M851.7 290.4 L868.8 277.0 L879.8 291.6 L895.6 281.9 L960.0 261.1" fill="none" stroke="#f07060" stroke-width="1.2" stroke-linecap="round" stroke-linejoin="round" stroke-dasharray="2.5 2" stroke-linecap="butt"/>
<path d="M944.4 227.0 L960.0 241.6" fill="none" stroke="#f07060" stroke-width="1.2" stroke-linecap="round" stroke-linejoin="round" stroke-dasharray="2.5 2" stroke-linecap="butt"/>
<path d="M871 702 L909.3 700.3" fill="none" stroke="#d2d2d2" stroke-width="3.5" stroke-linecap="round" stroke-linejoin="round"/>
<path d="M871 702 L909.3 700.3" fill="none" stroke="#f4f4f4" stroke-width="2.5" stroke-linecap="round" stroke-linejoin="round"/>
<path d="M871 708.5 L909 706.6" fill="none" stroke="#d2d2d2" stroke-width="3.5" stroke-linecap="round" stroke-linejoin="round"/>
<path d="M871 708.5 L909 706.6" fill="none" stroke="#f4f4f4" stroke-width="2.5" stroke-linecap="round" stroke-linejoin="round"/>
<path d="M909 706.6 L953 705" fill="none" stroke="#d2d2d2" stroke-width="4" stroke-linecap="round" stroke-linejoin="round"/>
<path d="M909 706.6 L953 705" fill="none" stroke="#f4f4f4" stroke-width="3" stroke-linecap="round" stroke-linejoin="round"/>
<path d="M946.8 649.0 L952.9 827.0" fill="none" stroke="#d2d2d2" stroke-width="3.5" stroke-linecap="round" stroke-linejoin="round"/>
<path d="M946.8 649.0 L952.9 827.0" fill="none" stroke="#f4f4f4" stroke-width="2.5" stroke-linecap="round" stroke-linejoin="round"/>
<path d="M871.2 705.0 L910.2 703.8" fill="none" stroke="#d2d2d2" stroke-width="4.5" stroke-linecap="round" stroke-linejoin="round"/>
<path d="M871.2 705.0 L910.2 703.8" fill="none" stroke="#f4f4f4" stroke-width="3.5" stroke-linecap="round" stroke-linejoin="round"/>
<path d="M876.1 785.5 L939.5 783.1" fill="none" stroke="#d2d2d2" stroke-width="4.5" stroke-linecap="round" stroke-linejoin="round"/>
<path d="M876.1 785.5 L939.5 783.1" fill="none" stroke="#f4f4f4" stroke-width="3.5" stroke-linecap="round" stroke-linejoin="round"/>
<path d="M910.2 627.0 L922.4 827.0" fill="none" stroke="#d2d2d2" stroke-width="5" stroke-linecap="round" stroke-linejoin="round"/>
<path d="M910.2 627.0 L922.4 827.0" fill="none" stroke="#f4f4f4" stroke-width="4" stroke-linecap="round" stroke-linejoin="round"/>
<path d="M138 244 L26 439" fill="none" stroke="#c9c9c9" stroke-width="6.2" stroke-linecap="round" stroke-linejoin="round"/>
<path d="M113.6 292.9 L264 381" fill="none" stroke="#c9c9c9" stroke-width="6.2" stroke-linecap="round" stroke-linejoin="round"/>
<path d="M100.2 333.1 L244 421" fill="none" stroke="#c9c9c9" stroke-width="6.2" stroke-linecap="round" stroke-linejoin="round"/>
<path d="M70.9 370.9 L220 459" fill="none" stroke="#c9c9c9" stroke-width="6.2" stroke-linecap="round" stroke-linejoin="round"/>
<path d="M197.7 238.0 L267.0 279.4" fill="none" stroke="#c9c9c9" stroke-width="6.2" stroke-linecap="round" stroke-linejoin="round"/>
<path d="M179.4 267.2 L244.5 304.9 L278.6 248.2 L241.9 227" fill="none" stroke="#c9c9c9" stroke-width="6.2" stroke-linecap="round" stroke-linejoin="round"/>
<path d="M134.3 300.2 L155.0 268.5" fill="none" stroke="#c9c9c9" stroke-width="5.7" stroke-linecap="round" stroke-linejoin="round"/>
<path d="M131.9 349.0 L173.3 292.9 L200.2 308.7" fill="none" stroke="#c9c9c9" stroke-width="5.7" stroke-linecap="round" stroke-linejoin="round"/>
<path d="M158.7 359.9 L175.8 334.3" fill="none" stroke="#c9c9c9" stroke-width="5.7" stroke-linecap="round" stroke-linejoin="round"/>
<path d="M173.3 367.2 L189.2 344.1" fill="none" stroke="#c9c9c9" stroke-width="5.7" stroke-linecap="round" stroke-linejoin="round"/>
<path d="M222 310 L124.6 456.3 L192.9 500.2" fill="none" stroke="#c9c9c9" stroke-width="5.7" stroke-linecap="round" stroke-linejoin="round"/>
<path d="M239.2 323.3 L201.4 392.9" fill="none" stroke="#c9c9c9" stroke-width="5.7" stroke-linecap="round" stroke-linejoin="round"/>
<path d="M253.8 330.7 L219.7 397.7" fill="none" stroke="#c9c9c9" stroke-width="5.7" stroke-linecap="round" stroke-linejoin="round"/>
<path d="M267.0 344.1 L234.3 412.4" fill="none" stroke="#c9c9c9" stroke-width="5.7" stroke-linecap="round" stroke-linejoin="round"/>
<path d="M118.5 347.7 L101.4 373.3 L75.8 358.7" fill="none" stroke="#c9c9c9" stroke-width="5.7" stroke-linecap="round" stroke-linejoin="round"/>
<path d="M141.6 380.7 L125.8 402.6" fill="none" stroke="#c9c9c9" stroke-width="5.7" stroke-linecap="round" stroke-linejoin="round"/>
<path d="M185.5 406.3 L173.3 427.0" fill="none" stroke="#c9c9c9" stroke-width="5.7" stroke-linecap="round" stroke-linejoin="round"/>
<path d="M90.4 388.0 L63.6 427.0" fill="none" stroke="#c9c9c9" stroke-width="5.7" stroke-linecap="round" stroke-linejoin="round"/>
<path d="M117.2 402.6 L102.6 427.0" fill="none" stroke="#c9c9c9" stroke-width="5.7" stroke-linecap="round" stroke-linejoin="round"/>
<path d="M40.4 316.0 L81.9 340.4" fill="none" stroke="#c9c9c9" stroke-width="5.7" stroke-linecap="round" stroke-linejoin="round"/>
<path d="M27.0 346.5 L34.3 350.2 L66.0 366.0" fill="none" stroke="#c9c9c9" stroke-width="5.7" stroke-linecap="round" stroke-linejoin="round"/>
<path d="M27.0 380.7 L49.0 392.9" fill="none" stroke="#c9c9c9" stroke-width="5.7" stroke-linecap="round" stroke-linejoin="round"/>
<path d="M355.6 227.0 L364.1 230.7 L370.2 359.9" fill="none" stroke="#c9c9c9" stroke-width="6.2" stroke-linecap="round" stroke-linejoin="round"/>
<path d="M422.6 235.5 L498.0 234.3" fill="none" stroke="#c9c9c9" stroke-width="6.2" stroke-linecap="round" stroke-linejoin="round"/>
<path d="M425.1 262.4 L498.0 261.1" fill="none" stroke="#c9c9c9" stroke-width="6.2" stroke-linecap="round" stroke-linejoin="round"/>
<path d="M423.9 290.4 L498.0 289.2" fill="none" stroke="#c9c9c9" stroke-width="6.2" stroke-linecap="round" stroke-linejoin="round"/>
<path d="M440.9 291.6 L442.1 355.0" fill="none" stroke="#c9c9c9" stroke-width="6.2" stroke-linecap="round" stroke-linejoin="round"/>
<path d="M470.2 302.6 L471.4 353.8" fill="none" stroke="#c9c9c9" stroke-width="6.2" stroke-linecap="round" stroke-linejoin="round"/>
<path d="M495.8 227.0 L497.0 358.7" fill="none" stroke="#c9c9c9" stroke-width="6.2" stroke-linecap="round" stroke-linejoin="round"/>
<path d="M303.7 254 L266.3 319.7 L285.6 331.2" fill="none" stroke="#c9c9c9" stroke-width="5.7" stroke-linecap="round" stroke-linejoin="round"/>
<path d="M258.0 273.3 L314.1 306.3" fill="none" stroke="#c9c9c9" stroke-width="6.2" stroke-linecap="round" stroke-linejoin="round"/>
<path d="M284.8 407.5 L414.1 399.0" fill="none" stroke="#c9c9c9" stroke-width="6.2" stroke-linecap="round" stroke-linejoin="round"/>
<path d="M426.3 396.5 L498.0 394.1" fill="none" stroke="#c9c9c9" stroke-width="6.2" stroke-linecap="round" stroke-linejoin="round"/>
<path d="M344.6 374.6 L348.2 427.0" fill="none" stroke="#c9c9c9" stroke-width="6.2" stroke-linecap="round" stroke-linejoin="round"/>
<path d="M258.0 413.6 L273.9 413.6" fill="none" stroke="#c9c9c9" stroke-width="5.7" stroke-linecap="round" stroke-linejoin="round"/>
<path d="M269.0 344.1 L258.0 363.6" fill="none" stroke="#c9c9c9" stroke-width="5.7" stroke-linecap="round" stroke-linejoin="round"/>
<path d="M489.0 289.2 L570.7 277.0" fill="none" stroke="#c9c9c9" stroke-width="6.2" stroke-linecap="round" stroke-linejoin="round"/>
<path d="M573.1 291.6 L635.3 246.5 L689.0 217.2" fill="none" stroke="#c9c9c9" stroke-width="6.2" stroke-linecap="round" stroke-linejoin="round"/>
<path d="M573.1 253.8 L615.8 227.0" fill="none" stroke="#c9c9c9" stroke-width="6.2" stroke-linecap="round" stroke-linejoin="round"/>
<path d="M506.1 253.8 L540.2 247.7" fill="none" stroke="#c9c9c9" stroke-width="6.2" stroke-linecap="round" stroke-linejoin="round"/>
<path d="M525.6 227.0 L524.4 250.2" fill="none" stroke="#c9c9c9" stroke-width="6.2" stroke-linecap="round" stroke-linejoin="round"/>
<path d="M540.2 227.0 L540.7 250.2" fill="none" stroke="#c9c9c9" stroke-width="6.2" stroke-linecap="round" stroke-linejoin="round"/>
<path d="M520.7 305.0 L521.9 349.0" fill="none" stroke="#c9c9c9" stroke-width="6.2" stroke-linecap="round" stroke-linejoin="round"/>
<path d="M545.1 294.1 L546.3 338.0" fill="none" stroke="#c9c9c9" stroke-width="6.2" stroke-linecap="round" stroke-linejoin="round"/>
<path d="M570.7 227.0 L573.1 339.2 L578.0 427.0" fill="none" stroke="#c9c9c9" stroke-width="6.2" stroke-linecap="round" stroke-linejoin="round"/>
<path d="M611.0 312.4 L614.6 353.8 L619.5 427.0" fill="none" stroke="#c9c9c9" stroke-width="6.2" stroke-linecap="round" stroke-linejoin="round"/>
<path d="M501.2 395.3 L571.9 373.3" fill="none" stroke="#c9c9c9" stroke-width="6.2" stroke-linecap="round" stroke-linejoin="round"/>
<path d="M537.8 392.9 L539.0 427.0" fill="none" stroke="#c9c9c9" stroke-width="6.2" stroke-linecap="round" stroke-linejoin="round"/>
<path d="M674.4 236.8 L696.3 227.0" fill="none" stroke="#c9c9c9" stroke-width="6.2" stroke-linecap="round" stroke-linejoin="round"/>
<path d="M696.3 270.9 L729.0 251.4" fill="none" stroke="#c9c9c9" stroke-width="5.7" stroke-linecap="round" stroke-linejoin="round"/>
<path d="M703.6 288.0 L729.0 275.8" fill="none" stroke="#c9c9c9" stroke-width="5.7" stroke-linecap="round" stroke-linejoin="round"/>
<path d="M720.0 258.7 L739.5 251.4" fill="none" stroke="#c9c9c9" stroke-width="6.2" stroke-linecap="round" stroke-linejoin="round"/>
<path d="M735.9 263.6 L765.1 300.2 L731.0 319.7 L720.0 327.0" fill="none" stroke="#c9c9c9" stroke-width="6.2" stroke-linecap="round" stroke-linejoin="round"/>
<path d="M729.8 275.8 L756.6 307.5" fill="none" stroke="#c9c9c9" stroke-width="5.7" stroke-linecap="round" stroke-linejoin="round"/>
<path d="M720.0 383.1 L798.0 329.4 L878.5 427.0" fill="none" stroke="#c9c9c9" stroke-width="6.2" stroke-linecap="round" stroke-linejoin="round"/>
<path d="M774.9 354.8 L818.8 413.3 L833.4 409.6 L859 440" fill="none" stroke="#c9c9c9" stroke-width="6.2" stroke-linecap="round" stroke-linejoin="round"/>
<path d="M771.2 438 L818.8 413.3" fill="none" stroke="#c9c9c9" stroke-width="6.2" stroke-linecap="round" stroke-linejoin="round"/>
<path d="M798.6 422.4 L782.2 385.9 L785.9 380.3" fill="none" stroke="#c9c9c9" stroke-width="6.2" stroke-linecap="round" stroke-linejoin="round"/>
<path d="M63.6 427.0 L61.1 435.5 L105.0 463.6" fill="none" stroke="#c9c9c9" stroke-width="6.2" stroke-linecap="round" stroke-linejoin="round"/>
<path d="M158.7 427.0 L149.0 452.6" fill="none" stroke="#c9c9c9" stroke-width="5.7" stroke-linecap="round" stroke-linejoin="round"/>
<path d="M163.6 427.0 L219.7 459.9" fill="none" stroke="#c9c9c9" stroke-width="6.2" stroke-linecap="round" stroke-linejoin="round"/>
<path d="M195.3 451.4 L183.1 475.8" fill="none" stroke="#c9c9c9" stroke-width="5.7" stroke-linecap="round" stroke-linejoin="round"/>
<path d="M222.1 427.0 L205.0 451.4" fill="none" stroke="#c9c9c9" stroke-width="5.7" stroke-linecap="round" stroke-linejoin="round"/>
<path d="M246.5 442.9 L267.0 441.6" fill="none" stroke="#c9c9c9" stroke-width="5.7" stroke-linecap="round" stroke-linejoin="round"/>
<path d="M245.3 477.0 L267.0 474.6" fill="none" stroke="#c9c9c9" stroke-width="5.7" stroke-linecap="round" stroke-linejoin="round"/>
<path d="M249.0 507.5 L267.0 506.3" fill="none" stroke="#c9c9c9" stroke-width="5.7" stroke-linecap="round" stroke-linejoin="round"/>
<path d="M192.9 534.3 L267.0 566.0" fill="none" stroke="#c9c9c9" stroke-width="6.2" stroke-linecap="round" stroke-linejoin="round"/>
<path d="M27.0 597.7 L39.2 584.3 L119.7 627.0 L134.3 634.3" fill="none" stroke="#c9c9c9" stroke-width="6.2" stroke-linecap="round" stroke-linejoin="round"/>
<path d="M258.0 442.9 L419.0 430.7" fill="none" stroke="#c9c9c9" stroke-width="6.2" stroke-linecap="round" stroke-linejoin="round"/>
<path d="M427.5 429.4 L498.0 428.2" fill="none" stroke="#c9c9c9" stroke-width="6.2" stroke-linecap="round" stroke-linejoin="round"/>
<path d="M258.0 477.0 L412.9 464.8" fill="none" stroke="#c9c9c9" stroke-width="6.2" stroke-linecap="round" stroke-linejoin="round"/>
<path d="M258.0 507.5 L470.2 491.6" fill="none" stroke="#c9c9c9" stroke-width="6.2" stroke-linecap="round" stroke-linejoin="round"/>
<path d="M437.3 527.0 L498.0 523.3" fill="none" stroke="#c9c9c9" stroke-width="6.2" stroke-linecap="round" stroke-linejoin="round"/>
<path d="M292.1 567.2 L428.7 558.7" fill="none" stroke="#c9c9c9" stroke-width="6.2" stroke-linecap="round" stroke-linejoin="round"/>
<path d="M347.0 427.0 L358.0 577.0" fill="none" stroke="#c9c9c9" stroke-width="6.2" stroke-linecap="round" stroke-linejoin="round"/>
<path d="M258.0 561.1 L280.0 569.7" fill="none" stroke="#c9c9c9" stroke-width="6.2" stroke-linecap="round" stroke-linejoin="round"/>
<path d="M545.1 458.7 L729.0 447.7" fill="none" stroke="#c9c9c9" stroke-width="6.2" stroke-linecap="round" stroke-linejoin="round"/>
<path d="M536.6 427.0 L543.9 496.5" fill="none" stroke="#c9c9c9" stroke-width="6.2" stroke-linecap="round" stroke-linejoin="round"/>
<path d="M620.7 427.0 L621.9 488.0 L630.5 619.7" fill="none" stroke="#c9c9c9" stroke-width="6.2" stroke-linecap="round" stroke-linejoin="round"/>
<path d="M579.2 427.0 L581.7 453.8" fill="none" stroke="#c9c9c9" stroke-width="6.2" stroke-linecap="round" stroke-linejoin="round"/>
<path d="M571.9 531.9 L618.3 529.4" fill="none" stroke="#c9c9c9" stroke-width="5.7" stroke-linecap="round" stroke-linejoin="round"/>
<path d="M576.8 564.8 L620.7 562.4" fill="none" stroke="#c9c9c9" stroke-width="5.7" stroke-linecap="round" stroke-linejoin="round"/>
<path d="M585.3 531.9 L586.6 563.6" fill="none" stroke="#c9c9c9" stroke-width="5.7" stroke-linecap="round" stroke-linejoin="round"/>
<path d="M609.7 531.9 L611.0 562.4" fill="none" stroke="#c9c9c9" stroke-width="5.7" stroke-linecap="round" stroke-linejoin="round"/>
<path d="M489.0 524.6 L503.6 523.3" fill="none" stroke="#c9c9c9" stroke-width="6.2" stroke-linecap="round" stroke-linejoin="round"/>
<path d="M737 455 L742 540 L749.3 619.7" fill="none" stroke="#c9c9c9" stroke-width="6.7" stroke-linecap="round" stroke-linejoin="round"/>
<path d="M720.0 446.5 L738.3 446.5" fill="none" stroke="#c9c9c9" stroke-width="6.2" stroke-linecap="round" stroke-linejoin="round"/>
<path d="M748.0 550.2 L816.3 542.9" fill="none" stroke="#c9c9c9" stroke-width="6.2" stroke-linecap="round" stroke-linejoin="round"/>
<path d="M876.1 427.0 L951.7 524.6 L927.3 547.7 L888.3 552.6" fill="none" stroke="#c9c9c9" stroke-width="6.2" stroke-linecap="round" stroke-linejoin="round"/>
<path d="M866.3 441.6 L915.1 517.2 L922.4 546.5" fill="none" stroke="#c9c9c9" stroke-width="6.2" stroke-linecap="round" stroke-linejoin="round"/>
<path d="M824.9 461.1 L863.9 536.8 L890.7 551.4" fill="none" stroke="#c9c9c9" stroke-width="6.2" stroke-linecap="round" stroke-linejoin="round"/>
<path d="M840.7 485.5 L876.1 467.2" fill="none" stroke="#c9c9c9" stroke-width="6.2" stroke-linecap="round" stroke-linejoin="round"/>
<path d="M883.4 523.3 L895.6 549.0" fill="none" stroke="#c9c9c9" stroke-width="5.7" stroke-linecap="round" stroke-linejoin="round"/>
<path d="M856.6 427.0 L866.3 441.6" fill="none" stroke="#c9c9c9" stroke-width="6.2" stroke-linecap="round" stroke-linejoin="round"/>
<path d="M751.7 575.8 L790.7 570.9 L793.2 580.7 L787.1 602.6 L761.5 605.0 L751.7 575.8" fill="none" stroke="#c9c9c9" stroke-width="5.2" stroke-linecap="round" stroke-linejoin="round"/>
<path d="M27.0 692.9 L75.8 677.0 L113.6 670.9" fill="none" stroke="#c9c9c9" stroke-width="6.2" stroke-linecap="round" stroke-linejoin="round"/>
<path d="M117.2 627.0 L170.9 651.4 L236.8 673.3 L267.0 679.4" fill="none" stroke="#c9c9c9" stroke-width="6.2" stroke-linecap="round" stroke-linejoin="round"/>
<path d="M236.8 673.3 L267.0 705.0" fill="none" stroke="#c9c9c9" stroke-width="6.2" stroke-linecap="round" stroke-linejoin="round"/>
<path d="M258.0 677.0 L289.7 684.3 L399.5 683.1" fill="none" stroke="#c9c9c9" stroke-width="6.2" stroke-linecap="round" stroke-linejoin="round"/>
<path d="M406.8 641.6 L397.0 717.2 L380.0 827.0" fill="none" stroke="#c9c9c9" stroke-width="6.2" stroke-linecap="round" stroke-linejoin="round"/>
<path d="M306.8 725.8 L397.0 717.2 L423.9 727.0 L498.0 723.3" fill="none" stroke="#c9c9c9" stroke-width="6.2" stroke-linecap="round" stroke-linejoin="round"/>
<path d="M287.3 685.5 L306.8 725.8 L355.6 827.0" fill="none" stroke="#c9c9c9" stroke-width="6.2" stroke-linecap="round" stroke-linejoin="round"/>
<path d="M258.0 696.5 L303.1 724.6" fill="none" stroke="#c9c9c9" stroke-width="6.2" stroke-linecap="round" stroke-linejoin="round"/>
<path d="M370.2 685.5 L370.2 718.5" fill="none" stroke="#c9c9c9" stroke-width="6.2" stroke-linecap="round" stroke-linejoin="round"/>
<path d="M342.1 725.8 L333.6 783.1" fill="none" stroke="#c9c9c9" stroke-width="6.2" stroke-linecap="round" stroke-linejoin="round"/>
<path d="M366.5 724.6 L355.6 809.9 L348.2 814.8" fill="none" stroke="#c9c9c9" stroke-width="6.2" stroke-linecap="round" stroke-linejoin="round"/>
<path d="M323.9 807.5 L336.0 800.2" fill="none" stroke="#c9c9c9" stroke-width="6.2" stroke-linecap="round" stroke-linejoin="round"/>
<path d="M439.7 683.1 L440.9 712.4 L498.0 711.1" fill="none" stroke="#c9c9c9" stroke-width="6.2" stroke-linecap="round" stroke-linejoin="round"/>
<path d="M440.9 692.9 L498.0 686.8" fill="none" stroke="#c9c9c9" stroke-width="6.2" stroke-linecap="round" stroke-linejoin="round"/>
<path d="M443.4 736.8 L447.0 770.9 L455.6 770.9" fill="none" stroke="#c9c9c9" stroke-width="6.2" stroke-linecap="round" stroke-linejoin="round"/>
<path d="M464.1 738.0 L470.2 809.9 L498.0 808.7" fill="none" stroke="#c9c9c9" stroke-width="6.2" stroke-linecap="round" stroke-linejoin="round"/>
<path d="M464.1 738.0 L498.0 735.5" fill="none" stroke="#c9c9c9" stroke-width="6.2" stroke-linecap="round" stroke-linejoin="round"/>
<path d="M460.4 822.1 L460.4 827.0" fill="none" stroke="#c9c9c9" stroke-width="5.2" stroke-linecap="round" stroke-linejoin="round"/>
<path d="M484.8 822.1 L484.8 827.0" fill="none" stroke="#c9c9c9" stroke-width="5.2" stroke-linecap="round" stroke-linejoin="round"/>
<path d="M489.0 722.1 L635.3 713.6 L729.0 707.5" fill="none" stroke="#c9c9c9" stroke-width="6.2" stroke-linecap="round" stroke-linejoin="round"/>
<path d="M630.5 627.0 L635.3 713.6 L640.2 827.0" fill="none" stroke="#c9c9c9" stroke-width="6.2" stroke-linecap="round" stroke-linejoin="round"/>
<path d="M489.0 685.5 L507.3 685.5" fill="none" stroke="#c9c9c9" stroke-width="6.2" stroke-linecap="round" stroke-linejoin="round"/>
<path d="M489.0 709.9 L507.3 708.7" fill="none" stroke="#c9c9c9" stroke-width="6.2" stroke-linecap="round" stroke-linejoin="round"/>
<path d="M506.1 678.2 L507.3 827.0" fill="none" stroke="#c9c9c9" stroke-width="6.2" stroke-linecap="round" stroke-linejoin="round"/>
<path d="M489.0 736.8 L501.2 736.8 L502.4 807.5 L489.0 808.7" fill="none" stroke="#c9c9c9" stroke-width="6.2" stroke-linecap="round" stroke-linejoin="round"/>
<path d="M489.0 767.2 L513.4 766.0" fill="none" stroke="#c9c9c9" stroke-width="6.2" stroke-linecap="round" stroke-linejoin="round"/>
<path d="M507.3 822.1 L507.3 827.0" fill="none" stroke="#c9c9c9" stroke-width="6.2" stroke-linecap="round" stroke-linejoin="round"/>
<path d="M720.0 707.5 L866.3 699.0" fill="none" stroke="#c9c9c9" stroke-width="6.2" stroke-linecap="round" stroke-linejoin="round"/>
<path d="M751.7 627.0 L760.2 827.0" fill="none" stroke="#c9c9c9" stroke-width="6.2" stroke-linecap="round" stroke-linejoin="round"/>
<path d="M800.5 702.6 L805.4 827.0" fill="none" stroke="#c9c9c9" stroke-width="6.2" stroke-linecap="round" stroke-linejoin="round"/>
<path d="M805.4 758.7 L856.6 758.7" fill="none" stroke="#c9c9c9" stroke-width="6.2" stroke-linecap="round" stroke-linejoin="round"/>
<path d="M757.8 644.1 L793.2 644.1 L794.4 700.2 L761.5 701.4 L757.8 644.1" fill="none" stroke="#c9c9c9" stroke-width="5.2" stroke-linecap="round" stroke-linejoin="round"/>
<path d="M934.6 651.4 L952.9 650.2" fill="none" stroke="#c9c9c9" stroke-width="6.2" stroke-linecap="round" stroke-linejoin="round"/>
<path d="M840.7 792.9 L842.0 827.0" fill="none" stroke="#c9c9c9" stroke-width="5.7" stroke-linecap="round" stroke-linejoin="round"/>
<path d="M664.6 627.0 L669.5 670.9" fill="none" stroke="#c9c9c9" stroke-width="5.2" stroke-linecap="round" stroke-linejoin="round"/>
<path d="M138 244 L26 439" fill="none" stroke="#ffffff" stroke-width="5" stroke-linecap="round" stroke-linejoin="round"/>
<path d="M113.6 292.9 L264 381" fill="none" stroke="#ffffff" stroke-width="5" stroke-linecap="round" stroke-linejoin="round"/>
<path d="M100.2 333.1 L244 421" fill="none" stroke="#ffffff" stroke-width="5" stroke-linecap="round" stroke-linejoin="round"/>
<path d="M70.9 370.9 L220 459" fill="none" stroke="#ffffff" stroke-width="5" stroke-linecap="round" stroke-linejoin="round"/>
<path d="M197.7 238.0 L267.0 279.4" fill="none" stroke="#ffffff" stroke-width="5" stroke-linecap="round" stroke-linejoin="round"/>
<path d="M179.4 267.2 L244.5 304.9 L278.6 248.2 L241.9 227" fill="none" stroke="#ffffff" stroke-width="5" stroke-linecap="round" stroke-linejoin="round"/>
<path d="M134.3 300.2 L155.0 268.5" fill="none" stroke="#ffffff" stroke-width="4.5" stroke-linecap="round" stroke-linejoin="round"/>
<path d="M131.9 349.0 L173.3 292.9 L200.2 308.7" fill="none" stroke="#ffffff" stroke-width="4.5" stroke-linecap="round" stroke-linejoin="round"/>
<path d="M158.7 359.9 L175.8 334.3" fill="none" stroke="#ffffff" stroke-width="4.5" stroke-linecap="round" stroke-linejoin="round"/>
<path d="M173.3 367.2 L189.2 344.1" fill="none" stroke="#ffffff" stroke-width="4.5" stroke-linecap="round" stroke-linejoin="round"/>
<path d="M222 310 L124.6 456.3 L192.9 500.2" fill="none" stroke="#ffffff" stroke-width="4.5" stroke-linecap="round" stroke-linejoin="round"/>
<path d="M239.2 323.3 L201.4 392.9" fill="none" stroke="#ffffff" stroke-width="4.5" stroke-linecap="round" stroke-linejoin="round"/>
<path d="M253.8 330.7 L219.7 397.7" fill="none" stroke="#ffffff" stroke-width="4.5" stroke-linecap="round" stroke-linejoin="round"/>
<path d="M267.0 344.1 L234.3 412.4" fill="none" stroke="#ffffff" stroke-width="4.5" stroke-linecap="round" stroke-linejoin="round"/>
<path d="M118.5 347.7 L101.4 373.3 L75.8 358.7" fill="none" stroke="#ffffff" stroke-width="4.5" stroke-linecap="round" stroke-linejoin="round"/>
<path d="M141.6 380.7 L125.8 402.6" fill="none" stroke="#ffffff" stroke-width="4.5" stroke-linecap="round" stroke-linejoin="round"/>
<path d="M185.5 406.3 L173.3 427.0" fill="none" stroke="#ffffff" stroke-width="4.5" stroke-linecap="round" stroke-linejoin="round"/>
<path d="M90.4 388.0 L63.6 427.0" fill="none" stroke="#ffffff" stroke-width="4.5" stroke-linecap="round" stroke-linejoin="round"/>
<path d="M117.2 402.6 L102.6 427.0" fill="none" stroke="#ffffff" stroke-width="4.5" stroke-linecap="round" stroke-linejoin="round"/>
<path d="M40.4 316.0 L81.9 340.4" fill="none" stroke="#ffffff" stroke-width="4.5" stroke-linecap="round" stroke-linejoin="round"/>
<path d="M27.0 346.5 L34.3 350.2 L66.0 366.0" fill="none" stroke="#ffffff" stroke-width="4.5" stroke-linecap="round" stroke-linejoin="round"/>
<path d="M27.0 380.7 L49.0 392.9" fill="none" stroke="#ffffff" stroke-width="4.5" stroke-linecap="round" stroke-linejoin="round"/>
<path d="M355.6 227.0 L364.1 230.7 L370.2 359.9" fill="none" stroke="#ffffff" stroke-width="5" stroke-linecap="round" stroke-linejoin="round"/>
<path d="M422.6 235.5 L498.0 234.3" fill="none" stroke="#ffffff" stroke-width="5" stroke-linecap="round" stroke-linejoin="round"/>
<path d="M425.1 262.4 L498.0 261.1" fill="none" stroke="#ffffff" stroke-width="5" stroke-linecap="round" stroke-linejoin="round"/>
<path d="M423.9 290.4 L498.0 289.2" fill="none" stroke="#ffffff" stroke-width="5" stroke-linecap="round" stroke-linejoin="round"/>
<path d="M440.9 291.6 L442.1 355.0" fill="none" stroke="#ffffff" stroke-width="5" stroke-linecap="round" stroke-linejoin="round"/>
<path d="M470.2 302.6 L471.4 353.8" fill="none" stroke="#ffffff" stroke-width="5" stroke-linecap="round" stroke-linejoin="round"/>
<path d="M495.8 227.0 L497.0 358.7" fill="none" stroke="#ffffff" stroke-width="5" stroke-linecap="round" stroke-linejoin="round"/>
<path d="M303.7 254 L266.3 319.7 L285.6 331.2" fill="none" stroke="#ffffff" stroke-width="4.5" stroke-linecap="round" stroke-linejoin="round"/>
<path d="M258.0 273.3 L314.1 306.3" fill="none" stroke="#ffffff" stroke-width="5" stroke-linecap="round" stroke-linejoin="round"/>
<path d="M284.8 407.5 L414.1 399.0" fill="none" stroke="#ffffff" stroke-width="5" stroke-linecap="round" stroke-linejoin="round"/>
<path d="M426.3 396.5 L498.0 394.1" fill="none" stroke="#ffffff" stroke-width="5" stroke-linecap="round" stroke-linejoin="round"/>
<path d="M344.6 374.6 L348.2 427.0" fill="none" stroke="#ffffff" stroke-width="5" stroke-linecap="round" stroke-linejoin="round"/>
<path d="M258.0 413.6 L273.9 413.6" fill="none" stroke="#ffffff" stroke-width="4.5" stroke-linecap="round" stroke-linejoin="round"/>
<path d="M269.0 344.1 L258.0 363.6" fill="none" stroke="#ffffff" stroke-width="4.5" stroke-linecap="round" stroke-linejoin="round"/>
<path d="M489.0 289.2 L570.7 277.0" fill="none" stroke="#ffffff" stroke-width="5" stroke-linecap="round" stroke-linejoin="round"/>
<path d="M573.1 291.6 L635.3 246.5 L689.0 217.2" fill="none" stroke="#ffffff" stroke-width="5" stroke-linecap="round" stroke-linejoin="round"/>
<path d="M573.1 253.8 L615.8 227.0" fill="none" stroke="#ffffff" stroke-width="5" stroke-linecap="round" stroke-linejoin="round"/>
<path d="M506.1 253.8 L540.2 247.7" fill="none" stroke="#ffffff" stroke-width="5" stroke-linecap="round" stroke-linejoin="round"/>
<path d="M525.6 227.0 L524.4 250.2" fill="none" stroke="#ffffff" stroke-width="5" stroke-linecap="round" stroke-linejoin="round"/>
<path d="M540.2 227.0 L540.7 250.2" fill="none" stroke="#ffffff" stroke-width="5" stroke-linecap="round" stroke-linejoin="round"/>
<path d="M520.7 305.0 L521.9 349.0" fill="none" stroke="#ffffff" stroke-width="5" stroke-linecap="round" stroke-linejoin="round"/>
<path d="M545.1 294.1 L546.3 338.0" fill="none" stroke="#ffffff" stroke-width="5" stroke-linecap="round" stroke-linejoin="round"/>
<path d="M570.7 227.0 L573.1 339.2 L578.0 427.0" fill="none" stroke="#ffffff" stroke-width="5" stroke-linecap="round" stroke-linejoin="round"/>
<path d="M611.0 312.4 L614.6 353.8 L619.5 427.0" fill="none" stroke="#ffffff" stroke-width="5" stroke-linecap="round" stroke-linejoin="round"/>
<path d="M501.2 395.3 L571.9 373.3" fill="none" stroke="#ffffff" stroke-width="5" stroke-linecap="round" stroke-linejoin="round"/>
<path d="M537.8 392.9 L539.0 427.0" fill="none" stroke="#ffffff" stroke-width="5" stroke-linecap="round" stroke-linejoin="round"/>
<path d="M674.4 236.8 L696.3 227.0" fill="none" stroke="#ffffff" stroke-width="5" stroke-linecap="round" stroke-linejoin="round"/>
<path d="M696.3 270.9 L729.0 251.4" fill="none" stroke="#ffffff" stroke-width="4.5" stroke-linecap="round" stroke-linejoin="round"/>
<path d="M703.6 288.0 L729.0 275.8" fill="none" stroke="#ffffff" stroke-width="4.5" stroke-linecap="round" stroke-linejoin="round"/>
<path d="M720.0 258.7 L739.5 251.4" fill="none" stroke="#ffffff" stroke-width="5" stroke-linecap="round" stroke-linejoin="round"/>
<path d="M735.9 263.6 L765.1 300.2 L731.0 319.7 L720.0 327.0" fill="none" stroke="#ffffff" stroke-width="5" stroke-linecap="round" stroke-linejoin="round"/>
<path d="M729.8 275.8 L756.6 307.5" fill="none" stroke="#ffffff" stroke-width="4.5" stroke-linecap="round" stroke-linejoin="round"/>
<path d="M720.0 383.1 L798.0 329.4 L878.5 427.0" fill="none" stroke="#ffffff" stroke-width="5" stroke-linecap="round" stroke-linejoin="round"/>
<path d="M774.9 354.8 L818.8 413.3 L833.4 409.6 L859 440" fill="none" stroke="#ffffff" stroke-width="5" stroke-linecap="round" stroke-linejoin="round"/>
<path d="M771.2 438 L818.8 413.3" fill="none" stroke="#ffffff" stroke-width="5" stroke-linecap="round" stroke-linejoin="round"/>
<path d="M798.6 422.4 L782.2 385.9 L785.9 380.3" fill="none" stroke="#ffffff" stroke-width="5" stroke-linecap="round" stroke-linejoin="round"/>
<path d="M63.6 427.0 L61.1 435.5 L105.0 463.6" fill="none" stroke="#ffffff" stroke-width="5" stroke-linecap="round" stroke-linejoin="round"/>
<path d="M158.7 427.0 L149.0 452.6" fill="none" stroke="#ffffff" stroke-width="4.5" stroke-linecap="round" stroke-linejoin="round"/>
<path d="M163.6 427.0 L219.7 459.9" fill="none" stroke="#ffffff" stroke-width="5" stroke-linecap="round" stroke-linejoin="round"/>
<path d="M195.3 451.4 L183.1 475.8" fill="none" stroke="#ffffff" stroke-width="4.5" stroke-linecap="round" stroke-linejoin="round"/>
<path d="M222.1 427.0 L205.0 451.4" fill="none" stroke="#ffffff" stroke-width="4.5" stroke-linecap="round" stroke-linejoin="round"/>
<path d="M246.5 442.9 L267.0 441.6" fill="none" stroke="#ffffff" stroke-width="4.5" stroke-linecap="round" stroke-linejoin="round"/>
<path d="M245.3 477.0 L267.0 474.6" fill="none" stroke="#ffffff" stroke-width="4.5" stroke-linecap="round" stroke-linejoin="round"/>
<path d="M249.0 507.5 L267.0 506.3" fill="none" stroke="#ffffff" stroke-width="4.5" stroke-linecap="round" stroke-linejoin="round"/>
<path d="M192.9 534.3 L267.0 566.0" fill="none" stroke="#ffffff" stroke-width="5" stroke-linecap="round" stroke-linejoin="round"/>
<path d="M27.0 597.7 L39.2 584.3 L119.7 627.0 L134.3 634.3" fill="none" stroke="#ffffff" stroke-width="5" stroke-linecap="round" stroke-linejoin="round"/>
<path d="M258.0 442.9 L419.0 430.7" fill="none" stroke="#ffffff" stroke-width="5" stroke-linecap="round" stroke-linejoin="round"/>
<path d="M427.5 429.4 L498.0 428.2" fill="none" stroke="#ffffff" stroke-width="5" stroke-linecap="round" stroke-linejoin="round"/>
<path d="M258.0 477.0 L412.9 464.8" fill="none" stroke="#ffffff" stroke-width="5" stroke-linecap="round" stroke-linejoin="round"/>
<path d="M258.0 507.5 L470.2 491.6" fill="none" stroke="#ffffff" stroke-width="5" stroke-linecap="round" stroke-linejoin="round"/>
<path d="M437.3 527.0 L498.0 523.3" fill="none" stroke="#ffffff" stroke-width="5" stroke-linecap="round" stroke-linejoin="round"/>
<path d="M292.1 567.2 L428.7 558.7" fill="none" stroke="#ffffff" stroke-width="5" stroke-linecap="round" stroke-linejoin="round"/>
<path d="M347.0 427.0 L358.0 577.0" fill="none" stroke="#ffffff" stroke-width="5" stroke-linecap="round" stroke-linejoin="round"/>
<path d="M258.0 561.1 L280.0 569.7" fill="none" stroke="#ffffff" stroke-width="5" stroke-linecap="round" stroke-linejoin="round"/>
<path d="M545.1 458.7 L729.0 447.7" fill="none" stroke="#ffffff" stroke-width="5" stroke-linecap="round" stroke-linejoin="round"/>
<path d="M536.6 427.0 L543.9 496.5" fill="none" stroke="#ffffff" stroke-width="5" stroke-linecap="round" stroke-linejoin="round"/>
<path d="M620.7 427.0 L621.9 488.0 L630.5 619.7" fill="none" stroke="#ffffff" stroke-width="5" stroke-linecap="round" stroke-linejoin="round"/>
<path d="M579.2 427.0 L581.7 453.8" fill="none" stroke="#ffffff" stroke-width="5" stroke-linecap="round" stroke-linejoin="round"/>
<path d="M571.9 531.9 L618.3 529.4" fill="none" stroke="#ffffff" stroke-width="4.5" stroke-linecap="round" stroke-linejoin="round"/>
<path d="M576.8 564.8 L620.7 562.4" fill="none" stroke="#ffffff" stroke-width="4.5" stroke-linecap="round" stroke-linejoin="round"/>
<path d="M585.3 531.9 L586.6 563.6" fill="none" stroke="#ffffff" stroke-width="4.5" stroke-linecap="round" stroke-linejoin="round"/>
<path d="M609.7 531.9 L611.0 562.4" fill="none" stroke="#ffffff" stroke-width="4.5" stroke-linecap="round" stroke-linejoin="round"/>
<path d="M489.0 524.6 L503.6 523.3" fill="none" stroke="#ffffff" stroke-width="5" stroke-linecap="round" stroke-linejoin="round"/>
<path d="M737 455 L742 540 L749.3 619.7" fill="none" stroke="#ffffff" stroke-width="5.5" stroke-linecap="round" stroke-linejoin="round"/>
<path d="M720.0 446.5 L738.3 446.5" fill="none" stroke="#ffffff" stroke-width="5" stroke-linecap="round" stroke-linejoin="round"/>
<path d="M748.0 550.2 L816.3 542.9" fill="none" stroke="#ffffff" stroke-width="5" stroke-linecap="round" stroke-linejoin="round"/>
<path d="M876.1 427.0 L951.7 524.6 L927.3 547.7 L888.3 552.6" fill="none" stroke="#ffffff" stroke-width="5" stroke-linecap="round" stroke-linejoin="round"/>
<path d="M866.3 441.6 L915.1 517.2 L922.4 546.5" fill="none" stroke="#ffffff" stroke-width="5" stroke-linecap="round" stroke-linejoin="round"/>
<path d="M824.9 461.1 L863.9 536.8 L890.7 551.4" fill="none" stroke="#ffffff" stroke-width="5" stroke-linecap="round" stroke-linejoin="round"/>
<path d="M840.7 485.5 L876.1 467.2" fill="none" stroke="#ffffff" stroke-width="5" stroke-linecap="round" stroke-linejoin="round"/>
<path d="M883.4 523.3 L895.6 549.0" fill="none" stroke="#ffffff" stroke-width="4.5" stroke-linecap="round" stroke-linejoin="round"/>
<path d="M856.6 427.0 L866.3 441.6" fill="none" stroke="#ffffff" stroke-width="5" stroke-linecap="round" stroke-linejoin="round"/>
<path d="M751.7 575.8 L790.7 570.9 L793.2 580.7 L787.1 602.6 L761.5 605.0 L751.7 575.8" fill="none" stroke="#ffffff" stroke-width="4" stroke-linecap="round" stroke-linejoin="round"/>
<path d="M27.0 692.9 L75.8 677.0 L113.6 670.9" fill="none" stroke="#ffffff" stroke-width="5" stroke-linecap="round" stroke-linejoin="round"/>
<path d="M117.2 627.0 L170.9 651.4 L236.8 673.3 L267.0 679.4" fill="none" stroke="#ffffff" stroke-width="5" stroke-linecap="round" stroke-linejoin="round"/>
<path d="M236.8 673.3 L267.0 705.0" fill="none" stroke="#ffffff" stroke-width="5" stroke-linecap="round" stroke-linejoin="round"/>
<path d="M258.0 677.0 L289.7 684.3 L399.5 683.1" fill="none" stroke="#ffffff" stroke-width="5" stroke-linecap="round" stroke-linejoin="round"/>
<path d="M406.8 641.6 L397.0 717.2 L380.0 827.0" fill="none" stroke="#ffffff" stroke-width="5" stroke-linecap="round" stroke-linejoin="round"/>
<path d="M306.8 725.8 L397.0 717.2 L423.9 727.0 L498.0 723.3" fill="none" stroke="#ffffff" stroke-width="5" stroke-linecap="round" stroke-linejoin="round"/>
<path d="M287.3 685.5 L306.8 725.8 L355.6 827.0" fill="none" stroke="#ffffff" stroke-width="5" stroke-linecap="round" stroke-linejoin="round"/>
<path d="M258.0 696.5 L303.1 724.6" fill="none" stroke="#ffffff" stroke-width="5" stroke-linecap="round" stroke-linejoin="round"/>
<path d="M370.2 685.5 L370.2 718.5" fill="none" stroke="#ffffff" stroke-width="5" stroke-linecap="round" stroke-linejoin="round"/>
<path d="M342.1 725.8 L333.6 783.1" fill="none" stroke="#ffffff" stroke-width="5" stroke-linecap="round" stroke-linejoin="round"/>
<path d="M366.5 724.6 L355.6 809.9 L348.2 814.8" fill="none" stroke="#ffffff" stroke-width="5" stroke-linecap="round" stroke-linejoin="round"/>
<path d="M323.9 807.5 L336.0 800.2" fill="none" stroke="#ffffff" stroke-width="5" stroke-linecap="round" stroke-linejoin="round"/>
<path d="M439.7 683.1 L440.9 712.4 L498.0 711.1" fill="none" stroke="#ffffff" stroke-width="5" stroke-linecap="round" stroke-linejoin="round"/>
<path d="M440.9 692.9 L498.0 686.8" fill="none" stroke="#ffffff" stroke-width="5" stroke-linecap="round" stroke-linejoin="round"/>
<path d="M443.4 736.8 L447.0 770.9 L455.6 770.9" fill="none" stroke="#ffffff" stroke-width="5" stroke-linecap="round" stroke-linejoin="round"/>
<path d="M464.1 738.0 L470.2 809.9 L498.0 808.7" fill="none" stroke="#ffffff" stroke-width="5" stroke-linecap="round" stroke-linejoin="round"/>
<path d="M464.1 738.0 L498.0 735.5" fill="none" stroke="#ffffff" stroke-width="5" stroke-linecap="round" stroke-linejoin="round"/>
<path d="M460.4 822.1 L460.4 827.0" fill="none" stroke="#ffffff" stroke-width="4" stroke-linecap="round" stroke-linejoin="round"/>
<path d="M484.8 822.1 L484.8 827.0" fill="none" stroke="#ffffff" stroke-width="4" stroke-linecap="round" stroke-linejoin="round"/>
<path d="M489.0 722.1 L635.3 713.6 L729.0 707.5" fill="none" stroke="#ffffff" stroke-width="5" stroke-linecap="round" stroke-linejoin="round"/>
<path d="M630.5 627.0 L635.3 713.6 L640.2 827.0" fill="none" stroke="#ffffff" stroke-width="5" stroke-linecap="round" stroke-linejoin="round"/>
<path d="M489.0 685.5 L507.3 685.5" fill="none" stroke="#ffffff" stroke-width="5" stroke-linecap="round" stroke-linejoin="round"/>
<path d="M489.0 709.9 L507.3 708.7" fill="none" stroke="#ffffff" stroke-width="5" stroke-linecap="round" stroke-linejoin="round"/>
<path d="M506.1 678.2 L507.3 827.0" fill="none" stroke="#ffffff" stroke-width="5" stroke-linecap="round" stroke-linejoin="round"/>
<path d="M489.0 736.8 L501.2 736.8 L502.4 807.5 L489.0 808.7" fill="none" stroke="#ffffff" stroke-width="5" stroke-linecap="round" stroke-linejoin="round"/>
<path d="M489.0 767.2 L513.4 766.0" fill="none" stroke="#ffffff" stroke-width="5" stroke-linecap="round" stroke-linejoin="round"/>
<path d="M507.3 822.1 L507.3 827.0" fill="none" stroke="#ffffff" stroke-width="5" stroke-linecap="round" stroke-linejoin="round"/>
<path d="M720.0 707.5 L866.3 699.0" fill="none" stroke="#ffffff" stroke-width="5" stroke-linecap="round" stroke-linejoin="round"/>
<path d="M751.7 627.0 L760.2 827.0" fill="none" stroke="#ffffff" stroke-width="5" stroke-linecap="round" stroke-linejoin="round"/>
<path d="M800.5 702.6 L805.4 827.0" fill="none" stroke="#ffffff" stroke-width="5" stroke-linecap="round" stroke-linejoin="round"/>
<path d="M805.4 758.7 L856.6 758.7" fill="none" stroke="#ffffff" stroke-width="5" stroke-linecap="round" stroke-linejoin="round"/>
<path d="M757.8 644.1 L793.2 644.1 L794.4 700.2 L761.5 701.4 L757.8 644.1" fill="none" stroke="#ffffff" stroke-width="4" stroke-linecap="round" stroke-linejoin="round"/>
<path d="M934.6 651.4 L952.9 650.2" fill="none" stroke="#ffffff" stroke-width="5" stroke-linecap="round" stroke-linejoin="round"/>
<path d="M840.7 792.9 L842.0 827.0" fill="none" stroke="#ffffff" stroke-width="4.5" stroke-linecap="round" stroke-linejoin="round"/>
<path d="M664.6 627.0 L669.5 670.9" fill="none" stroke="#ffffff" stroke-width="4" stroke-linecap="round" stroke-linejoin="round"/>
<path d="M349.5 222 C347.9 227.7 343.2 246.3 339.7 256.3 C336.2 266.3 334.1 270.4 328.7 281.9 C323.3 293.4 314.0 312.1 307.2 325.1 C300.4 338.2 294.6 348.5 287.9 360.2 C281.2 371.9 272.8 385.3 266.8 395.3 C260.8 405.3 260.2 407.3 252 420 C243.8 432.7 228.4 454.4 217.8 471.5 C207.2 488.6 197.6 505.8 188.2 522.9 C178.8 540.0 170.6 555.9 161.2 574.4 C151.8 592.9 136.4 624.1 131.5 634" fill="none" stroke="#c9c9c9" stroke-width="10.9" stroke-linecap="round" stroke-linejoin="round"/>
<path d="M270 373 C272.1 372.7 264.1 372.7 282.4 371.4 C300.7 370.1 347.1 367.1 380 365 C412.9 362.9 452.2 362.4 480 358.9 C507.8 355.4 528.3 350.2 547 343.8 C565.7 337.4 575.8 330.9 592 320.3 C608.2 309.7 629.5 291.6 644.4 280 C659.3 268.4 675.3 255.7 681.5 250.8" fill="none" stroke="#c9c9c9" stroke-width="12.9" stroke-linecap="round" stroke-linejoin="round"/>
<path d="M493.4 227.0 L494.4 358.7" fill="none" stroke="#c9c9c9" stroke-width="7.4" stroke-linecap="round" stroke-linejoin="round"/>
<path d="M495 359 L510.5 622" fill="none" stroke="#c9c9c9" stroke-width="12.4" stroke-linecap="round" stroke-linejoin="round"/>
<path d="M512.2 502.6 C548.3 500.2 684.2 492.3 729.0 488.0 C773.8 483.7 756.5 486.6 781.0 477.0 C805.5 467.4 858.6 439.2 876.1 430.7 C893.6 422.2 884.3 426.6 885.9 425.8" fill="none" stroke="#c9c9c9" stroke-width="8.9" stroke-linecap="round" stroke-linejoin="round"/>
<path d="M634 227 C637.1 233.6 645.9 251.1 652.5 266.6 C659.1 282.1 663.7 300.3 673.6 320 C683.5 339.7 702.7 365.8 712 385 C721.3 404.2 725.3 422.8 729.5 435 C733.7 447.2 735.8 454.2 737 458" fill="none" stroke="#c9c9c9" stroke-width="10.9" stroke-linecap="round" stroke-linejoin="round"/>
<path d="M667 227 C669.5 231.7 671.2 231.2 682 255 C692.8 278.8 718.8 341.3 732 370 C745.2 398.7 752.3 410.3 761.5 427 C770.7 443.7 772.0 440.7 787 470 C802.0 499.3 840.2 578.9 851.7 602.6 C863.2 626.3 855.3 610.4 856 612" fill="none" stroke="#c9c9c9" stroke-width="9.9" stroke-linecap="round" stroke-linejoin="round"/>
<path d="M856 620 C856.9 632.2 860.2 673.5 861.5 693.5 C862.8 713.5 863.2 725.1 864 740 C864.8 754.9 864.3 771.0 866.3 783.1 C868.3 795.2 872.4 804.3 876.1 812.4 C879.8 820.5 886.3 828.6 888.3 831.9" fill="none" stroke="#c9c9c9" stroke-width="12.4" stroke-linecap="round" stroke-linejoin="round"/>
<path d="M349.5 222 C347.9 227.7 343.2 246.3 339.7 256.3 C336.2 266.3 334.1 270.4 328.7 281.9 C323.3 293.4 314.0 312.1 307.2 325.1 C300.4 338.2 294.6 348.5 287.9 360.2 C281.2 371.9 272.8 385.3 266.8 395.3 C260.8 405.3 260.2 407.3 252 420 C243.8 432.7 228.4 454.4 217.8 471.5 C207.2 488.6 197.6 505.8 188.2 522.9 C178.8 540.0 170.6 555.9 161.2 574.4 C151.8 592.9 136.4 624.1 131.5 634" fill="none" stroke="#ffffff" stroke-width="9.5" stroke-linecap="round" stroke-linejoin="round"/>
<path d="M270 373 C272.1 372.7 264.1 372.7 282.4 371.4 C300.7 370.1 347.1 367.1 380 365 C412.9 362.9 452.2 362.4 480 358.9 C507.8 355.4 528.3 350.2 547 343.8 C565.7 337.4 575.8 330.9 592 320.3 C608.2 309.7 629.5 291.6 644.4 280 C659.3 268.4 675.3 255.7 681.5 250.8" fill="none" stroke="#ffffff" stroke-width="11.5" stroke-linecap="round" stroke-linejoin="round"/>
<path d="M493.4 227.0 L494.4 358.7" fill="none" stroke="#ffffff" stroke-width="6" stroke-linecap="round" stroke-linejoin="round"/>
<path d="M495 359 L510.5 622" fill="none" stroke="#ffffff" stroke-width="11" stroke-linecap="round" stroke-linejoin="round"/>
<path d="M512.2 502.6 C548.3 500.2 684.2 492.3 729.0 488.0 C773.8 483.7 756.5 486.6 781.0 477.0 C805.5 467.4 858.6 439.2 876.1 430.7 C893.6 422.2 884.3 426.6 885.9 425.8" fill="none" stroke="#ffffff" stroke-width="7.5" stroke-linecap="round" stroke-linejoin="round"/>
<path d="M634 227 C637.1 233.6 645.9 251.1 652.5 266.6 C659.1 282.1 663.7 300.3 673.6 320 C683.5 339.7 702.7 365.8 712 385 C721.3 404.2 725.3 422.8 729.5 435 C733.7 447.2 735.8 454.2 737 458" fill="none" stroke="#ffffff" stroke-width="9.5" stroke-linecap="round" stroke-linejoin="round"/>
<path d="M667 227 C669.5 231.7 671.2 231.2 682 255 C692.8 278.8 718.8 341.3 732 370 C745.2 398.7 752.3 410.3 761.5 427 C770.7 443.7 772.0 440.7 787 470 C802.0 499.3 840.2 578.9 851.7 602.6 C863.2 626.3 855.3 610.4 856 612" fill="none" stroke="#ffffff" stroke-width="8.5" stroke-linecap="round" stroke-linejoin="round"/>
<path d="M856 620 C856.9 632.2 860.2 673.5 861.5 693.5 C862.8 713.5 863.2 725.1 864 740 C864.8 754.9 864.3 771.0 866.3 783.1 C868.3 795.2 872.4 804.3 876.1 812.4 C879.8 820.5 886.3 828.6 888.3 831.9" fill="none" stroke="#ffffff" stroke-width="11" stroke-linecap="round" stroke-linejoin="round"/>
<path d="M512.2 636.8 L524.9 829.4" fill="none" stroke="#a8ac6a" stroke-width="12.5" stroke-linecap="round" stroke-linejoin="round"/>
<path d="M512.2 636.8 L524.9 829.4" fill="none" stroke="#f7fabf" stroke-width="11" stroke-linecap="round" stroke-linejoin="round"/>
<path d="M5 498 C8.8 500.1 13.8 502.8 28 510.6 C42.2 518.4 68.5 534.0 90 545 C111.5 556.0 137.0 567.1 157 576.4 C177.0 585.7 191.7 593.4 210 601 C228.3 608.6 248.7 616.9 267 622.3 C285.3 627.7 302.9 631.0 320 633.5 C337.1 636.0 351.5 637.2 369.8 637.5 C388.1 637.8 408.1 637.0 430 635.5 C451.9 634.0 469.8 631.3 501.5 628.3 C533.2 625.3 583.6 619.5 620 617.3 C656.4 615.0 681.4 616.8 720 614.8 C758.6 612.8 812.9 607.5 851.7 605 C890.5 602.5 933.3 601.0 953 600 C972.7 599.0 967.2 599.2 970 599" fill="none" stroke="#c9a05a" stroke-width="16.5" stroke-linecap="round" stroke-linejoin="round"/>
<path d="M5 498 C8.8 500.1 13.8 502.8 28 510.6 C42.2 518.4 68.5 534.0 90 545 C111.5 556.0 137.0 567.1 157 576.4 C177.0 585.7 191.7 593.4 210 601 C228.3 608.6 248.7 616.9 267 622.3 C285.3 627.7 302.9 631.0 320 633.5 C337.1 636.0 351.5 637.2 369.8 637.5 C388.1 637.8 408.1 637.0 430 635.5 C451.9 634.0 469.8 631.3 501.5 628.3 C533.2 625.3 583.6 619.5 620 617.3 C656.4 615.0 681.4 616.8 720 614.8 C758.6 612.8 812.9 607.5 851.7 605 C890.5 602.5 933.3 601.0 953 600 C972.7 599.0 967.2 599.2 970 599" fill="none" stroke="#fcd6a4" stroke-width="15" stroke-linecap="round" stroke-linejoin="round"/>
<path d="M90 203 L10 339" fill="none" stroke="#d88a70" stroke-width="19.5" stroke-linecap="round" stroke-linejoin="round"/>
<path d="M90 203 L10 339" fill="none" stroke="#f9b29c" stroke-width="18" stroke-linecap="round" stroke-linejoin="round"/>
<g transform="translate(41 521) rotate(26)"><path d="M-5 0 H3" stroke="#4a4a4a" stroke-width="1.1"/><path d="M5.5 0 L1.5 -2.6 L1.5 2.6 Z" fill="#4a4a4a"/></g>
<g transform="translate(53 526) rotate(206)"><path d="M-5 0 H3" stroke="#4a4a4a" stroke-width="1.1"/><path d="M5.5 0 L1.5 -2.6 L1.5 2.6 Z" fill="#4a4a4a"/></g>
<g transform="translate(184 584) rotate(26)"><path d="M-5 0 H3" stroke="#4a4a4a" stroke-width="1.1"/><path d="M5.5 0 L1.5 -2.6 L1.5 2.6 Z" fill="#4a4a4a"/></g>
<g transform="translate(393 632) rotate(182)"><path d="M-5 0 H3" stroke="#4a4a4a" stroke-width="1.1"/><path d="M5.5 0 L1.5 -2.6 L1.5 2.6 Z" fill="#4a4a4a"/></g>
<g transform="translate(383 639) rotate(2)"><path d="M-5 0 H3" stroke="#4a4a4a" stroke-width="1.1"/><path d="M5.5 0 L1.5 -2.6 L1.5 2.6 Z" fill="#4a4a4a"/></g>
<g transform="translate(540 624.5) rotate(182)"><path d="M-5 0 H3" stroke="#4a4a4a" stroke-width="1.1"/><path d="M5.5 0 L1.5 -2.6 L1.5 2.6 Z" fill="#4a4a4a"/></g>
<g transform="translate(795.6 609.9) rotate(182)"><path d="M-5 0 H3" stroke="#4a4a4a" stroke-width="1.1"/><path d="M5.5 0 L1.5 -2.6 L1.5 2.6 Z" fill="#4a4a4a"/></g>
<g transform="translate(749.3 614.8) rotate(2)"><path d="M-5 0 H3" stroke="#4a4a4a" stroke-width="1.1"/><path d="M5.5 0 L1.5 -2.6 L1.5 2.6 Z" fill="#4a4a4a"/></g>
<g transform="translate(887 602) rotate(182)"><path d="M-5 0 H3" stroke="#4a4a4a" stroke-width="1.1"/><path d="M5.5 0 L1.5 -2.6 L1.5 2.6 Z" fill="#4a4a4a"/></g>
<g transform="translate(303 368) rotate(184)"><path d="M-5 0 H3" stroke="#4a4a4a" stroke-width="1.1"/><path d="M5.5 0 L1.5 -2.6 L1.5 2.6 Z" fill="#4a4a4a"/></g>
<g transform="translate(368 367) rotate(-4)"><path d="M-5 0 H3" stroke="#4a4a4a" stroke-width="1.1"/><path d="M5.5 0 L1.5 -2.6 L1.5 2.6 Z" fill="#4a4a4a"/></g>
<g transform="translate(491 356.3) rotate(184)"><path d="M-5 0 H3" stroke="#4a4a4a" stroke-width="1.1"/><path d="M5.5 0 L1.5 -2.6 L1.5 2.6 Z" fill="#4a4a4a"/></g>
<g transform="translate(546.3 347.7) rotate(-25)"><path d="M-5 0 H3" stroke="#4a4a4a" stroke-width="1.1"/><path d="M5.5 0 L1.5 -2.6 L1.5 2.6 Z" fill="#4a4a4a"/></g>
<g transform="translate(592.7 313.6) rotate(145)"><path d="M-5 0 H3" stroke="#4a4a4a" stroke-width="1.1"/><path d="M5.5 0 L1.5 -2.6 L1.5 2.6 Z" fill="#4a4a4a"/></g>
<g transform="translate(661 268.5) rotate(-35)"><path d="M-5 0 H3" stroke="#4a4a4a" stroke-width="1.1"/><path d="M5.5 0 L1.5 -2.6 L1.5 2.6 Z" fill="#4a4a4a"/></g>
<g transform="translate(322.7 298.4) rotate(-55)"><path d="M-5 0 H3" stroke="#4a4a4a" stroke-width="1.1"/><path d="M5.5 0 L1.5 -2.6 L1.5 2.6 Z" fill="#4a4a4a"/></g>
<g transform="translate(306 313) rotate(120)"><path d="M-5 0 H3" stroke="#4a4a4a" stroke-width="1.1"/><path d="M5.5 0 L1.5 -2.6 L1.5 2.6 Z" fill="#4a4a4a"/></g>
<g transform="translate(195 520) rotate(-60)"><path d="M-5 0 H3" stroke="#4a4a4a" stroke-width="1.1"/><path d="M5.5 0 L1.5 -2.6 L1.5 2.6 Z" fill="#4a4a4a"/></g>
<g transform="translate(669.5 321) rotate(62)"><path d="M-5 0 H3" stroke="#4a4a4a" stroke-width="1.1"/><path d="M5.5 0 L1.5 -2.6 L1.5 2.6 Z" fill="#4a4a4a"/></g>
<g transform="translate(711 397.7) rotate(242)"><path d="M-5 0 H3" stroke="#4a4a4a" stroke-width="1.1"/><path d="M5.5 0 L1.5 -2.6 L1.5 2.6 Z" fill="#4a4a4a"/></g>
<g transform="translate(498.8 464.8) rotate(90)"><path d="M-5 0 H3" stroke="#4a4a4a" stroke-width="1.1"/><path d="M5.5 0 L1.5 -2.6 L1.5 2.6 Z" fill="#4a4a4a"/></g>
<g transform="translate(508.5 560) rotate(-90)"><path d="M-5 0 H3" stroke="#4a4a4a" stroke-width="1.1"/><path d="M5.5 0 L1.5 -2.6 L1.5 2.6 Z" fill="#4a4a4a"/></g>
<g transform="translate(518.3 751.4) rotate(90)"><path d="M-5 0 H3" stroke="#4a4a4a" stroke-width="1.1"/><path d="M5.5 0 L1.5 -2.6 L1.5 2.6 Z" fill="#4a4a4a"/></g>
<g transform="translate(523 797.7) rotate(-90)"><path d="M-5 0 H3" stroke="#4a4a4a" stroke-width="1.1"/><path d="M5.5 0 L1.5 -2.6 L1.5 2.6 Z" fill="#4a4a4a"/></g>
<g transform="translate(594 497.7) rotate(-2)"><path d="M-5 0 H3" stroke="#4a4a4a" stroke-width="1.1"/><path d="M5.5 0 L1.5 -2.6 L1.5 2.6 Z" fill="#4a4a4a"/></g>
<g transform="translate(618.3 494) rotate(178)"><path d="M-5 0 H3" stroke="#4a4a4a" stroke-width="1.1"/><path d="M5.5 0 L1.5 -2.6 L1.5 2.6 Z" fill="#4a4a4a"/></g>
<g transform="translate(727 490) rotate(0)"><path d="M-5 0 H3" stroke="#4a4a4a" stroke-width="1.1"/><path d="M5.5 0 L1.5 -2.6 L1.5 2.6 Z" fill="#4a4a4a"/></g>
<g transform="translate(792 469.7) rotate(155)"><path d="M-5 0 H3" stroke="#4a4a4a" stroke-width="1.1"/><path d="M5.5 0 L1.5 -2.6 L1.5 2.6 Z" fill="#4a4a4a"/></g>
<g transform="translate(853 638) rotate(90)"><path d="M-5 0 H3" stroke="#4a4a4a" stroke-width="1.1"/><path d="M5.5 0 L1.5 -2.6 L1.5 2.6 Z" fill="#4a4a4a"/></g>
<g transform="translate(845.6 700) rotate(182)"><path d="M-5 0 H3" stroke="#4a4a4a" stroke-width="1.1"/><path d="M5.5 0 L1.5 -2.6 L1.5 2.6 Z" fill="#4a4a4a"/></g>
<g transform="translate(868.8 790.4) rotate(-70)"><path d="M-5 0 H3" stroke="#4a4a4a" stroke-width="1.1"/><path d="M5.5 0 L1.5 -2.6 L1.5 2.6 Z" fill="#4a4a4a"/></g>
<g transform="translate(764 645.3) rotate(0)"><path d="M-5 0 H3" stroke="#4a4a4a" stroke-width="1.1"/><path d="M5.5 0 L1.5 -2.6 L1.5 2.6 Z" fill="#4a4a4a"/></g>
<g transform="translate(269 377)" fill="none" stroke="#ac39ac" stroke-width="1.1"><path d="M-6 -4 h2 l1.5 6.5 h7.5 l1.5 -5 h-10"/><path d="M-2.5 -1 h8 M-2 0.8 h7.5 M-0.5 -2.5 v5 M1.8 -2.5 v5 M4 -2.5 v5"/><path d="M6 -4 l1.5 -2"/><circle cx="-2" cy="4" r="1"/><circle cx="4" cy="4" r="1"/></g>
<g transform="translate(280 416)" fill="none" stroke="#ac39ac" stroke-width="1.1"><path d="M-6 -4 h2 l1.5 6.5 h7.5 l1.5 -5 h-10"/><path d="M-2.5 -1 h8 M-2 0.8 h7.5 M-0.5 -2.5 v5 M1.8 -2.5 v5 M4 -2.5 v5"/><path d="M6 -4 l1.5 -2"/><circle cx="-2" cy="4" r="1"/><circle cx="4" cy="4" r="1"/></g>
<g transform="translate(810.2 468.5)" fill="none" stroke="#ac39ac" stroke-width="1.1"><path d="M-6 -4 h2 l1.5 6.5 h7.5 l1.5 -5 h-10"/><path d="M-2.5 -1 h8 M-2 0.8 h7.5 M-0.5 -2.5 v5 M1.8 -2.5 v5 M4 -2.5 v5"/><path d="M6 -4 l1.5 -2"/><circle cx="-2" cy="4" r="1"/><circle cx="4" cy="4" r="1"/></g>
<g transform="translate(938.3 579.4)" fill="none" stroke="#ac39ac" stroke-width="1.1"><path d="M-6 -4 h2 l1.5 6.5 h7.5 l1.5 -5 h-10"/><path d="M-2.5 -1 h8 M-2 0.8 h7.5 M-0.5 -2.5 v5 M1.8 -2.5 v5 M4 -2.5 v5"/><path d="M6 -4 l1.5 -2"/><circle cx="-2" cy="4" r="1"/><circle cx="4" cy="4" r="1"/></g>
<g transform="translate(851.7 725.8)" fill="none" stroke="#ac39ac" stroke-width="1.1"><path d="M-6 -4 h2 l1.5 6.5 h7.5 l1.5 -5 h-10"/><path d="M-2.5 -1 h8 M-2 0.8 h7.5 M-0.5 -2.5 v5 M1.8 -2.5 v5 M4 -2.5 v5"/><path d="M6 -4 l1.5 -2"/><circle cx="-2" cy="4" r="1"/><circle cx="4" cy="4" r="1"/></g>
<g transform="translate(726 661)"><rect x="-6" y="-4.5" width="12" height="10" fill="#ac39ac"/><rect x="-3" y="-8" width="6" height="4" fill="none" stroke="#ac39ac" stroke-width="1.3"/><text x="0" y="4" font-size="9" font-weight="bold" fill="#fff" text-anchor="middle">&amp;</text></g>
<g transform="translate(746 681)"><rect x="-6" y="-4.5" width="12" height="10" fill="#ac39ac"/><rect x="-3" y="-8" width="6" height="4" fill="none" stroke="#ac39ac" stroke-width="1.3"/><text x="0" y="4" font-size="9" font-weight="bold" fill="#fff" text-anchor="middle">&amp;</text></g>
<text x="210" y="577" dy="0.36em" font-size="15" font-weight="bold" fill="#0092da" fill-opacity="1" text-anchor="middle">P</text>
<text x="778.5" y="719" dy="0.36em" font-size="15" font-weight="bold" fill="#0092da" fill-opacity="1" text-anchor="middle">P</text>
<text x="843.2" y="671" dy="0.36em" font-size="15" font-weight="bold" fill="#0092da" fill-opacity="1" text-anchor="middle">P</text>
<text x="698.8" y="664" dy="0.36em" font-size="15" font-weight="bold" fill="#0092da" fill-opacity="0.45" text-anchor="middle">P</text>
<rect x="782" y="623" width="14" height="14.5" rx="2" fill="#0092da"/><rect x="784.5" y="625" width="9" height="10.5" rx="1.5" fill="#fff"/><rect x="785.5" y="626.5" width="7" height="3.5" fill="#0092da"/><circle cx="786" cy="632.5" r="0.8" fill="#0092da"/><circle cx="792" cy="632.5" r="0.8" fill="#0092da"/>
<g fill="#734a08"><rect x="419" y="505" width="2.6" height="8"/><path d="M420.3 503.5 l1.5 2 h-3z"/><rect x="417.5" y="512.5" width="5.6" height="1.6"/><rect x="416.3" y="514" width="8" height="1.3"/></g>
<g><rect x="467" y="488" width="28" height="8" fill="#76b83a"/><rect x="467" y="495.9" width="45.7" height="8" fill="#3a8ad6"/><path d="M494.8 481 h4.2 v15 h-4.2z" fill="#3a8ad6"/><path d="M499 491 h13.7 v5 h-13.7z" fill="#3a8ad6"/><path d="M499 481 h5.8 l7.9 9 v1 h-13.7z" fill="#d8d8d8" stroke="#8fbce6" stroke-width="0.3"/><rect x="507.5" y="494.5" width="5.2" height="1.3" fill="#8fc0ea"/><circle cx="475" cy="504" r="4.5" fill="#4a4a4a"/><circle cx="471.3" cy="503.2" r="4.3" fill="#008000"/><circle cx="503.9" cy="504.1" r="4.9" fill="#4a4a4a"/><circle cx="503.9" cy="504.1" r="1.5" fill="#eeeeee"/></g>
<text x="256" y="274" dy="0.36em" text-anchor="middle" font-size="9.6" fill="#222" stroke="#fff" stroke-width="2.2" stroke-opacity="0.85" paint-order="stroke" transform="rotate(31 256 274)">Calle 2-C</text>
<text x="189.2" y="340.4" dy="0.36em" text-anchor="middle" font-size="9.6" fill="#222" stroke="#fff" stroke-width="2.2" stroke-opacity="0.85" paint-order="stroke" transform="rotate(31 189.2 340.4)">Calle 4</text>
<text x="175.3" y="380.7" dy="0.36em" text-anchor="middle" font-size="9.6" fill="#222" stroke="#fff" stroke-width="2.2" stroke-opacity="0.85" paint-order="stroke" transform="rotate(31 175.3 380.7)">Calle 5</text>
<text x="143.6" y="416.0" dy="0.36em" text-anchor="middle" font-size="9.6" fill="#222" stroke="#fff" stroke-width="2.2" stroke-opacity="0.85" paint-order="stroke" transform="rotate(31 143.6 416.0)">Calle 6</text>
<text x="32.4" y="304.6" dy="0.36em" text-anchor="middle" font-size="9.6" fill="#222" stroke="#fff" stroke-width="2.2" stroke-opacity="0.85" paint-order="stroke" transform="rotate(-60 32.4 304.6)">ltzeg</text>
<text x="344" y="238" dy="0.36em" text-anchor="middle" font-size="9.6" fill="#222" stroke="#fff" stroke-width="2.2" stroke-opacity="0.85" paint-order="stroke" transform="rotate(-66 344 238)">Avenida El Progreso</text>
<text x="367.8" y="287.5" dy="0.36em" text-anchor="middle" font-size="9.6" fill="#222" stroke="#fff" stroke-width="2.2" stroke-opacity="0.85" paint-order="stroke" transform="rotate(90 367.8 287.5)">Calle 8</text>
<text x="455.6" y="235.5" dy="0.36em" text-anchor="middle" font-size="9.6" fill="#222" stroke="#fff" stroke-width="2.2" stroke-opacity="0.85" paint-order="stroke">Calle 3-B</text>
<text x="459.5" y="262.9" dy="0.36em" text-anchor="middle" font-size="9.6" fill="#222" stroke="#fff" stroke-width="2.2" stroke-opacity="0.85" paint-order="stroke">Calle 3-A</text>
<text x="459.5" y="290.4" dy="0.36em" text-anchor="middle" font-size="9.6" fill="#222" stroke="#fff" stroke-width="2.2" stroke-opacity="0.85" paint-order="stroke">Calle 3</text>
<text x="492.1" y="249.0" dy="0.36em" text-anchor="middle" font-size="9.6" fill="#222" stroke="#fff" stroke-width="2.2" stroke-opacity="0.85" paint-order="stroke" transform="rotate(90 492.1 249.0)">Los LLanos</text>
<text x="428.7" y="364.3" dy="0.36em" text-anchor="middle" font-size="9.6" fill="#222" stroke="#fff" stroke-width="2.2" stroke-opacity="0.85" paint-order="stroke" transform="rotate(-5 428.7 364.3)">Calle Colombia</text>
<text x="350.2" y="403.1" dy="0.36em" text-anchor="middle" font-size="9.6" fill="#222" stroke="#fff" stroke-width="2.2" stroke-opacity="0.85" paint-order="stroke" transform="rotate(-4 350.2 403.1)">Calle Kloster 1-A</text>
<text x="460.0" y="395.3" dy="0.36em" text-anchor="middle" font-size="9.6" fill="#222" stroke="#fff" stroke-width="2.2" stroke-opacity="0.85" paint-order="stroke" transform="rotate(-2 460.0 395.3)">Kloster 1</text>
<text x="532.9" y="281.9" dy="0.36em" text-anchor="middle" font-size="9.6" fill="#222" stroke="#fff" stroke-width="2.2" stroke-opacity="0.85" paint-order="stroke" transform="rotate(-8 532.9 281.9)">Calle Tercera (3ra)</text>
<text x="606.1" y="268.5" dy="0.36em" text-anchor="middle" font-size="9.6" fill="#222" stroke="#fff" stroke-width="2.2" stroke-opacity="0.85" paint-order="stroke" transform="rotate(-36 606.1 268.5)">Calle Libertad</text>
<text x="626.8" y="290.4" dy="0.36em" text-anchor="middle" font-size="9.6" fill="#222" stroke="#fff" stroke-width="2.2" stroke-opacity="0.85" paint-order="stroke" transform="rotate(-36 626.8 290.4)">Calle Colombia</text>
<text x="575.6" y="392.9" dy="0.36em" text-anchor="middle" font-size="9.6" fill="#222" stroke="#fff" stroke-width="2.2" stroke-opacity="0.85" paint-order="stroke" transform="rotate(85 575.6 392.9)">Avenida Zulia</text>
<text x="618.5" y="400" dy="0.36em" text-anchor="middle" font-size="9.6" fill="#222" stroke="#fff" stroke-width="2.2" stroke-opacity="0.85" paint-order="stroke" transform="rotate(84 618.5 400)">Avenida Piedemonte</text>
<text x="687.8" y="361.1" dy="0.36em" text-anchor="middle" font-size="9.6" fill="#222" stroke="#fff" stroke-width="2.2" stroke-opacity="0.85" paint-order="stroke" transform="rotate(66 687.8 361.1)">Avenida Táchira</text>
<text x="755.4" y="362.4" dy="0.36em" text-anchor="middle" font-size="9.6" fill="#222" stroke="#fff" stroke-width="2.2" stroke-opacity="0.85" paint-order="stroke" transform="rotate(-36 755.4 362.4)">Calle 1B</text>
<text x="794.4" y="385.5" dy="0.36em" text-anchor="middle" font-size="9.6" fill="#222" stroke="#fff" stroke-width="2.2" stroke-opacity="0.85" paint-order="stroke" transform="rotate(58 794.4 385.5)">Calle Padova</text>
<text x="804.1" y="422.1" dy="0.36em" text-anchor="middle" font-size="9.6" fill="#222" stroke="#fff" stroke-width="2.2" stroke-opacity="0.85" paint-order="stroke" transform="rotate(-30 804.1 422.1)">Calle 1A</text>
<text x="763" y="430.5" dy="0.36em" text-anchor="middle" font-size="9.6" fill="#222" stroke="#fff" stroke-width="2.2" stroke-opacity="0.85" paint-order="stroke" transform="rotate(62 763 430.5)">Avenida Marquitos</text>
<text x="111.1" y="552.6" dy="0.36em" text-anchor="middle" font-size="9.6" fill="#222" stroke="#fff" stroke-width="2.2" stroke-opacity="0.85" paint-order="stroke" transform="rotate(27 111.1 552.6)">Av. Los Andes</text>
<text x="159.9" y="576.3" dy="0.36em" text-anchor="middle" font-size="9.6" fill="#222" stroke="#fff" stroke-width="2.2" stroke-opacity="0.85" paint-order="stroke">Locatel</text>
<text x="224.6" y="609.9" dy="0.36em" text-anchor="middle" font-size="9.6" fill="#222" stroke="#fff" stroke-width="2.2" stroke-opacity="0.85" paint-order="stroke" transform="rotate(24 224.6 609.9)">Av. Los Andes</text>
<text x="217.2" y="475.8" dy="0.36em" text-anchor="middle" font-size="9.6" fill="#222" stroke="#fff" stroke-width="2.2" stroke-opacity="0.85" paint-order="stroke" transform="rotate(-60 217.2 475.8)">Avenida El Progreso</text>
<text x="329.5" y="438.0" dy="0.36em" text-anchor="middle" font-size="9.6" fill="#222" stroke="#fff" stroke-width="2.2" stroke-opacity="0.85" paint-order="stroke" transform="rotate(-4 329.5 438.0)">Calle Kloster 2-A</text>
<text x="460.4" y="429.0" dy="0.36em" text-anchor="middle" font-size="9.6" fill="#222" stroke="#fff" stroke-width="2.2" stroke-opacity="0.85" paint-order="stroke" transform="rotate(-2 460.4 429.0)">Kloster 2</text>
<text x="329.5" y="470.9" dy="0.36em" text-anchor="middle" font-size="9.6" fill="#222" stroke="#fff" stroke-width="2.2" stroke-opacity="0.85" paint-order="stroke" transform="rotate(-4 329.5 470.9)">Calle Kloster 3-A</text>
<text x="375.6" y="499.4" dy="0.36em" text-anchor="middle" font-size="9.6" fill="#222" stroke="#fff" stroke-width="2.2" stroke-opacity="0.85" paint-order="stroke" transform="rotate(-4 375.6 499.4)">Calle Kloster 4-A</text>
<text x="390.2" y="531.4" dy="0.36em" text-anchor="middle" font-size="9.6" fill="#222" stroke="#fff" stroke-width="2.2" stroke-opacity="0.85" paint-order="stroke" transform="rotate(-4 390.2 531.4)">Calle Kloster 5-A</text>
<text x="325.1" y="564.8" dy="0.36em" text-anchor="middle" font-size="9.6" fill="#222" stroke="#fff" stroke-width="2.2" stroke-opacity="0.85" paint-order="stroke" transform="rotate(-3 325.1 564.8)">Calle Kloster</text>
<text x="392.9" y="562.4" dy="0.36em" text-anchor="middle" font-size="9.6" fill="#222" stroke="#fff" stroke-width="2.2" stroke-opacity="0.85" paint-order="stroke" transform="rotate(-4 392.9 562.4)">Calle Kloster 6-A</text>
<text x="539" y="444.7" dy="0.36em" text-anchor="middle" font-size="9.6" fill="#222" stroke="#fff" stroke-width="2.2" stroke-opacity="0.85" paint-order="stroke" transform="rotate(85 539 444.7)">Avenida Cojedes</text>
<text x="638.3" y="452.6" dy="0.36em" text-anchor="middle" font-size="9.6" fill="#222" stroke="#fff" stroke-width="2.2" stroke-opacity="0.85" paint-order="stroke" transform="rotate(-2 638.3 452.6)">Calle 1</text>
<text x="693.9" y="490.9" dy="0.36em" text-anchor="middle" font-size="9.6" fill="#222" stroke="#fff" stroke-width="2.2" stroke-opacity="0.85" paint-order="stroke" transform="rotate(-2 693.9 490.9)">Av. Francia</text>
<text x="506.1" y="529.4" dy="0.36em" text-anchor="middle" font-size="9.6" fill="#222" stroke="#fff" stroke-width="2.2" stroke-opacity="0.85" paint-order="stroke" transform="rotate(84 506.1 529.4)">Los Llanos</text>
<text x="624.4" y="558.7" dy="0.36em" text-anchor="middle" font-size="9.6" fill="#222" stroke="#fff" stroke-width="2.2" stroke-opacity="0.85" paint-order="stroke" transform="rotate(85 624.4 558.7)">Avenida Piedemonte</text>
<text x="579.2" y="620.9" dy="0.36em" text-anchor="middle" font-size="9.6" fill="#222" stroke="#fff" stroke-width="2.2" stroke-opacity="0.85" paint-order="stroke" transform="rotate(-3 579.2 620.9)">Av. Los Andes</text>
<text x="630.5" y="613.6" dy="0.36em" text-anchor="middle" font-size="9.6" fill="#222" stroke="#fff" stroke-width="2.2" stroke-opacity="0.85" paint-order="stroke">Mango</text>
<text x="630.5" y="624.6" dy="0.36em" text-anchor="middle" font-size="9.6" fill="#222" stroke="#fff" stroke-width="2.2" stroke-opacity="0.85" paint-order="stroke">Center</text>
<text x="702.6" y="617.5" dy="0.36em" text-anchor="middle" font-size="9.6" fill="#222" stroke="#fff" stroke-width="2.2" stroke-opacity="0.85" paint-order="stroke" transform="rotate(-3 702.6 617.5)">Av. Los Andes</text>
<text x="501.2" y="475.8" dy="0.36em" text-anchor="middle" font-size="9.6" fill="#222" stroke="#fff" stroke-width="2.2" stroke-opacity="0.85" paint-order="stroke" transform="rotate(84 501.2 475.8)">Av</text>
<text x="754.1" y="484.3" dy="0.36em" text-anchor="middle" font-size="9.6" fill="#222" stroke="#fff" stroke-width="2.2" stroke-opacity="0.85" paint-order="stroke" transform="rotate(-12 754.1 484.3)">Av. Francia</text>
<text x="890.7" y="446.5" dy="0.36em" text-anchor="middle" font-size="9.6" fill="#222" stroke="#fff" stroke-width="2.2" stroke-opacity="0.85" paint-order="stroke" transform="rotate(53 890.7 446.5)">Av. Los Toros</text>
<text x="877.3" y="464.8" dy="0.36em" text-anchor="middle" font-size="9.6" fill="#222" stroke="#fff" stroke-width="2.2" stroke-opacity="0.85" paint-order="stroke" transform="rotate(58 877.3 464.8)">Calle Padova</text>
<text x="873.7" y="499.0" dy="0.36em" text-anchor="middle" font-size="9.6" fill="#222" stroke="#fff" stroke-width="2.2" stroke-opacity="0.85" paint-order="stroke" transform="rotate(-26 873.7 499.0)">Calle Torino</text>
<text x="870.0" y="538.0" dy="0.36em" text-anchor="middle" font-size="9.6" fill="#222" stroke="#fff" stroke-width="2.2" stroke-opacity="0.85" paint-order="stroke" transform="rotate(55 870.0 538.0)">Caller Roma</text>
<text x="783.4" y="546.5" dy="0.36em" text-anchor="middle" font-size="9.6" fill="#222" stroke="#fff" stroke-width="2.2" stroke-opacity="0.85" paint-order="stroke" transform="rotate(-5 783.4 546.5)">Calle Capri</text>
<text x="851.7" y="608.7" dy="0.36em" text-anchor="middle" font-size="9.6" fill="#222" stroke="#fff" stroke-width="2.2" stroke-opacity="0.85" paint-order="stroke">La Miami</text>
<text x="922.4" y="599.7" dy="0.36em" text-anchor="middle" font-size="9.6" fill="#222" stroke="#fff" stroke-width="2.2" stroke-opacity="0.85" paint-order="stroke" transform="rotate(-4 922.4 599.7)">Av. Los Andes</text>
<text x="509" y="632" dy="0.36em" text-anchor="middle" font-size="9.6" fill="#222" stroke="#fff" stroke-width="2.2" stroke-opacity="0.85" paint-order="stroke" transform="rotate(-1 509 632)">Trago Express</text>
<text x="455.6" y="725.8" dy="0.36em" text-anchor="middle" font-size="9.6" fill="#222" stroke="#fff" stroke-width="2.2" stroke-opacity="0.85" paint-order="stroke" transform="rotate(-3 455.6 725.8)">Avenida Zuiza</text>
<text x="332.4" y="783.1" dy="0.36em" text-anchor="middle" font-size="9.6" fill="#222" stroke="#fff" stroke-width="2.2" stroke-opacity="0.85" paint-order="stroke" transform="rotate(66 332.4 783.1)">Calle 1</text>
<text x="575.6" y="718.5" dy="0.36em" text-anchor="middle" font-size="9.6" fill="#222" stroke="#fff" stroke-width="2.2" stroke-opacity="0.85" paint-order="stroke" transform="rotate(-3 575.6 718.5)">Avenida Zuiza</text>
<text x="696.3" y="709.9" dy="0.36em" text-anchor="middle" font-size="9.6" fill="#222" stroke="#fff" stroke-width="2.2" stroke-opacity="0.85" paint-order="stroke" transform="rotate(-3 696.3 709.9)">Avenida Zuiza</text>
<text x="513.4" y="700.2" dy="0.36em" text-anchor="middle" font-size="9.6" fill="#222" stroke="#fff" stroke-width="2.2" stroke-opacity="0.85" paint-order="stroke" transform="rotate(84 513.4 700.2)">Avenida Los Llanos</text>
<text x="635.3" y="750.2" dy="0.36em" text-anchor="middle" font-size="9.6" fill="#222" stroke="#fff" stroke-width="2.2" stroke-opacity="0.85" paint-order="stroke" transform="rotate(88 635.3 750.2)">Avenida Piedemonte</text>
<text x="524.4" y="809.9" dy="0.36em" text-anchor="middle" font-size="9.6" fill="#222" stroke="#fff" stroke-width="2.2" stroke-opacity="0.85" paint-order="stroke" transform="rotate(87 524.4 809.9)">Aven</text>
<text x="469.0" y="696.5" dy="0.36em" text-anchor="middle" font-size="11" fill="#666" font-style="italic" stroke="#fff" stroke-width="2.2" stroke-opacity="0.85" paint-order="stroke">Campo</text>
<text x="469.0" y="707.5" dy="0.36em" text-anchor="middle" font-size="11" fill="#666" font-style="italic" stroke="#fff" stroke-width="2.2" stroke-opacity="0.85" paint-order="stroke">de Oro</text>
<text x="417.8" y="778.2" dy="0.36em" text-anchor="middle" font-size="11" fill="#666" font-style="italic" stroke="#fff" stroke-width="2.2" stroke-opacity="0.85" paint-order="stroke">Villa Rebecca</text>
<text x="477.5" y="770.4" dy="0.36em" text-anchor="middle" font-size="11" fill="#666" font-style="italic" stroke="#fff" stroke-width="2.2" stroke-opacity="0.85" paint-order="stroke">Resd. Villas</text>
<text x="480.0" y="781.9" dy="0.36em" text-anchor="middle" font-size="11" fill="#666" font-style="italic" stroke="#fff" stroke-width="2.2" stroke-opacity="0.85" paint-order="stroke">de Oro</text>
<text x="580.5" y="751.4" dy="0.36em" text-anchor="middle" font-size="11" fill="#666" font-style="italic" stroke="#fff" stroke-width="2.2" stroke-opacity="0.85" paint-order="stroke">Urb. Tierras</text>
<text x="580.5" y="762.9" dy="0.36em" text-anchor="middle" font-size="11" fill="#666" font-style="italic" stroke="#fff" stroke-width="2.2" stroke-opacity="0.85" paint-order="stroke">del Sol</text>
<text x="611.0" y="809.4" dy="0.36em" text-anchor="middle" font-size="11" fill="#666" font-style="italic" stroke="#fff" stroke-width="2.2" stroke-opacity="0.85" paint-order="stroke">Resd. Dorado</text>
<text x="611.0" y="821.4" dy="0.36em" text-anchor="middle" font-size="11" fill="#666" font-style="italic" stroke="#fff" stroke-width="2.2" stroke-opacity="0.85" paint-order="stroke">Country</text>
<text x="684.1" y="729.9" dy="0.36em" text-anchor="middle" font-size="12" fill="#555">Eurobuilding</text>
<text x="806.6" y="702.6" dy="0.36em" text-anchor="middle" font-size="9.6" fill="#222" stroke="#fff" stroke-width="2.2" stroke-opacity="0.85" paint-order="stroke" transform="rotate(-3 806.6 702.6)">Calle Zuiza</text>
<text x="832.2" y="758.7" dy="0.36em" text-anchor="middle" font-size="9.6" fill="#222" stroke="#fff" stroke-width="2.2" stroke-opacity="0.85" paint-order="stroke">Calle Bern</text>
<text x="802.9" y="785.5" dy="0.36em" text-anchor="middle" font-size="9.6" fill="#222" stroke="#fff" stroke-width="2.2" stroke-opacity="0.85" paint-order="stroke" transform="rotate(86 802.9 785.5)">Calle Luzern</text>
<text x="759.0" y="788.0" dy="0.36em" text-anchor="middle" font-size="9.6" fill="#222" stroke="#fff" stroke-width="2.2" stroke-opacity="0.85" paint-order="stroke" transform="rotate(86 759.0 788.0)">Avenida Táchira</text>
<text x="859.5" y="676" dy="0.36em" text-anchor="middle" font-size="9.6" fill="#222" stroke="#fff" stroke-width="2.2" stroke-opacity="0.85" paint-order="stroke" transform="rotate(81 859.5 676)">Av. Andrés Bello</text>
<text x="868.8" y="746.5" dy="0.36em" text-anchor="middle" font-size="9.6" fill="#222" stroke="#fff" stroke-width="2.2" stroke-opacity="0.85" paint-order="stroke" transform="rotate(80 868.8 746.5)">Av. Andres Bello</text>
<text x="911.5" y="727.0" dy="0.36em" text-anchor="middle" font-size="9.6" fill="#222" stroke="#fff" stroke-width="2.2" stroke-opacity="0.85" paint-order="stroke" transform="rotate(86 911.5 727.0)">Calle Maya</text>
<text x="842.0" y="809.9" dy="0.36em" text-anchor="middle" font-size="9.6" fill="#222" stroke="#fff" stroke-width="2.2" stroke-opacity="0.85" paint-order="stroke" transform="rotate(88 842.0 809.9)">Calle</text></svg><div style="position:absolute;left:10px;top:10px;width:34px;height:64px;border:2px solid rgba(0,0,0,0.2);border-radius:5px;background:#fff;background-clip:padding-box"></div>
<div style="position:absolute;left:12px;top:41px;width:30px;height:1px;background:#ccc"></div>
<svg style="position:absolute;left:0;top:0" width="100" height="100">
 <rect x="21.6" y="25.4" width="12.6" height="2.6" fill="#000"/><rect x="26.6" y="20.5" width="2.6" height="12.4" fill="#000"/>
 <rect x="22.2" y="55.8" width="11.4" height="2.5" fill="#000"/>
</svg>
<div style="position:absolute;left:868.5px;top:10px;width:48px;height:48px;border:2px solid rgba(0,0,0,0.2);border-radius:5px;background:#fff;background-clip:padding-box"></div>
<svg style="position:absolute;left:866px;top:10px" width="60" height="60">
 <path d="M26 36.8 l12.9 -7.3 l-12.9 -7.2 l-12.9 7.2 z" fill="#b9b9b9" stroke="#8a8a8a" stroke-width="0.7"/>
 <path d="M26 33.1 l12.9 -7.3 l-12.9 -7.2 l-12.9 7.2 z" fill="#cfcfcf" stroke="#8a8a8a" stroke-width="0.7"/>
 <path d="M26 29.4 l12.9 -7.3 l-12.9 -7.2 l-12.9 7.2 z" fill="#e9e9e9" stroke="#8a8a8a" stroke-width="0.7"/>
 <path d="M26 27.6 l9.6 -5.5 l-9.6 -5.4 l-9.6 5.4 z" fill="#d8d8d8"/>
</svg>
<div style="position:absolute;right:0;bottom:0;height:16px;padding:0 5px;background:rgba(255,255,255,0.7);font-size:11px;line-height:16px;color:#0078a8;font-family:'Liberation Sans',sans-serif">Leaflet</div>
</div>
</div></body></html>
